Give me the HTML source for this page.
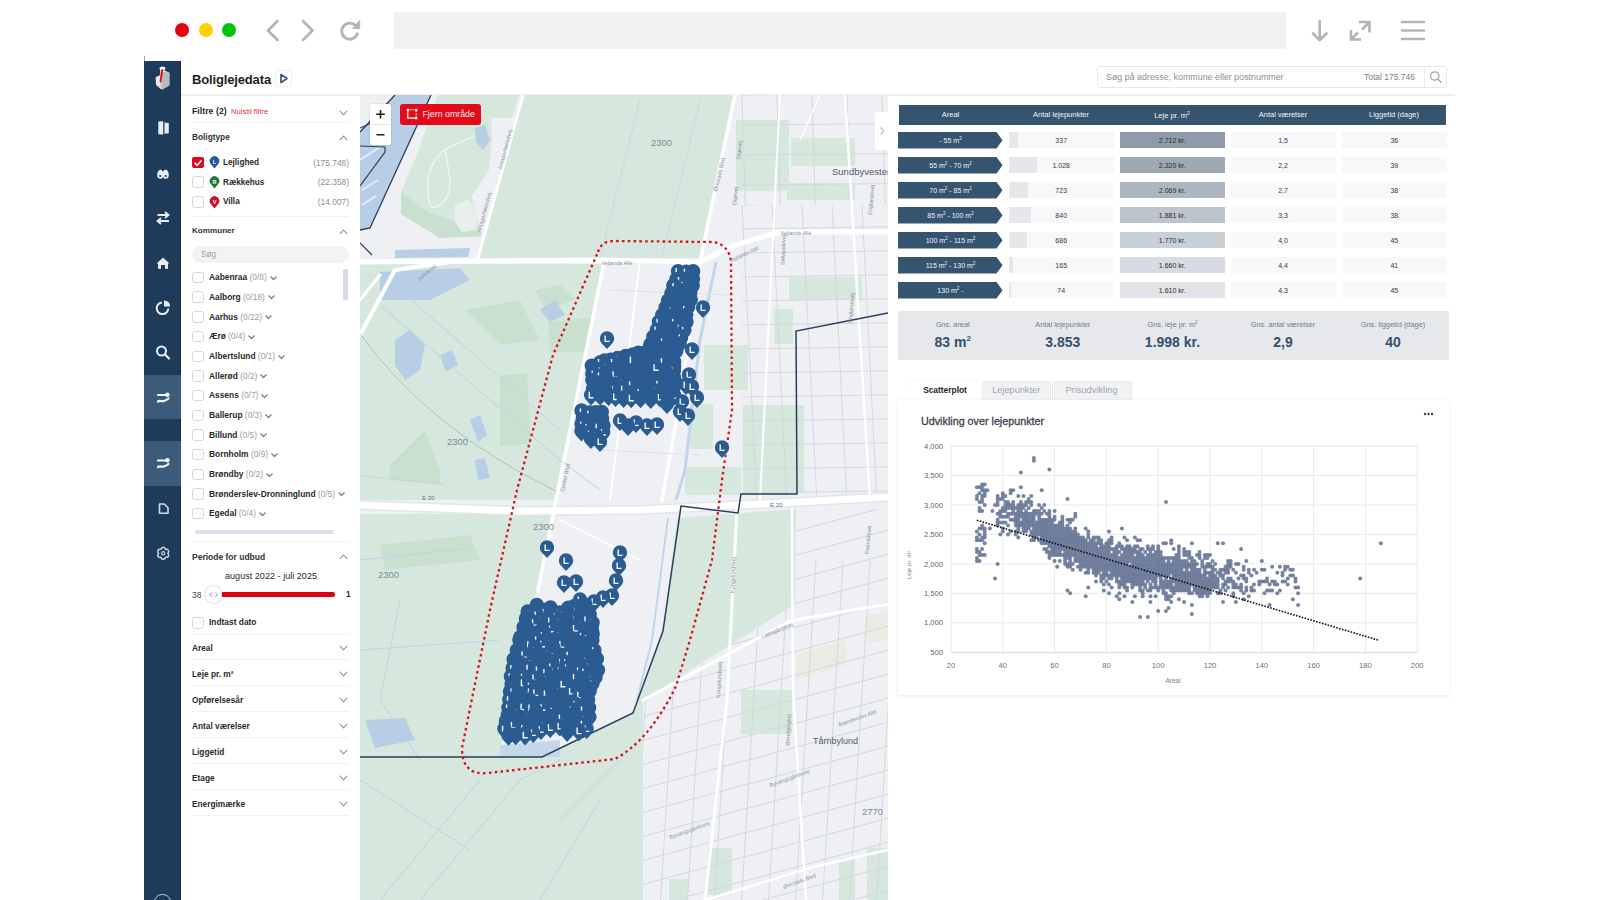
<!DOCTYPE html><html><head><meta charset="utf-8"><style>
*{margin:0;padding:0;box-sizing:border-box}
html,body{width:1600px;height:900px;overflow:hidden;background:#fff;font-family:"Liberation Sans",sans-serif;color:#222}
.a{position:absolute}
.t{position:absolute;white-space:nowrap;line-height:1}
</style></head><body>
<div class="a" style="left:175px;top:23px;width:14px;height:14px;border-radius:50%;background:#e8000d"></div>
<div class="a" style="left:199px;top:23px;width:14px;height:14px;border-radius:50%;background:#ffd200"></div>
<div class="a" style="left:222px;top:23px;width:14px;height:14px;border-radius:50%;background:#00c60a"></div>
<svg class="a" style="left:260px;top:15px" width="120" height="32" viewBox="0 0 120 32">
 <path d="M17.5 6 L8 15.5 L17.5 25" fill="none" stroke="#b4b4b4" stroke-width="2.6" stroke-linecap="round" stroke-linejoin="round"/>
 <path d="M43 6 L52.5 15.5 L43 25" fill="none" stroke="#b4b4b4" stroke-width="2.6" stroke-linecap="round" stroke-linejoin="round"/>
 <path d="M95.5 10.6 A8 8 0 1 0 97.3 18.8" fill="none" stroke="#b4b4b4" stroke-width="2.9" stroke-linecap="round"/>
 <path d="M99.8 5.2 L99.8 13.9 L92.4 13.4Z" fill="#b4b4b4" stroke="#b4b4b4" stroke-width="0.6" stroke-linejoin="round"/>
</svg>
<div class="a" style="left:394px;top:12px;width:892px;height:37px;background:#f2f2f2"></div>
<svg class="a" style="left:1300px;top:15px" width="140" height="32" viewBox="0 0 140 32">
 <path d="M19.7 6 L19.7 25" stroke="#b4b4b4" stroke-width="2.6" stroke-linecap="round"/>
 <path d="M13 18.5 L19.7 25 L26.5 18.5" fill="none" stroke="#b4b4b4" stroke-width="2.6" stroke-linecap="round" stroke-linejoin="round"/>
 <path d="M59 7 L69.5 7 L69.5 17.5 M69.5 7 L62 14.5" fill="none" stroke="#b4b4b4" stroke-width="2.6" stroke-linejoin="miter"/>
 <path d="M51 15 L51 24.5 L61 24.5 M51 24.5 L58 17.5" fill="none" stroke="#b4b4b4" stroke-width="2.6" stroke-linejoin="miter"/>
 <path d="M102 7 L124 7 M102 15.5 L124 15.5 M102 24 L124 24" stroke="#b4b4b4" stroke-width="2.6" stroke-linecap="round"/>
</svg>
<div class="a" style="left:144px;top:56px;width:1px;height:6px;background:#9aa5b5"></div><div class="a" style="left:144px;top:61px;width:37px;height:839px;background:#1e3b5a"></div><div class="a" style="left:180px;top:61px;width:1px;height:839px;background:#132d48"></div><div class="a" style="left:144px;top:375px;width:37px;height:44px;background:#3b5b7b"></div><div class="a" style="left:144px;top:441px;width:37px;height:45px;background:#3b5b7b"></div><div class="a" style="left:181px;top:94px;width:1274px;height:2px;background:#eceef0"></div>
<svg class="a" style="left:144px;top:61px" width="37" height="520" viewBox="0 0 37 520">
 <!-- logo -->
 <path d="M16 9 L25.4 11.8 L25.4 24.6 L18.2 28.4 L16 27.3Z" fill="#c9ccd2"/>
 <path d="M16 9 L18.2 8.4 L25.4 11.8 L18.2 11Z" fill="#f2f3f5"/>
 <path d="M18.2 11 L25.4 11.8 L25.4 24.6 L18.2 28.4Z" fill="#b4b8bf"/>
 <path d="M11.6 16.2 L16 14 L16 27.3 L12.1 24Z" fill="#e6e7ea"/>
 <path d="M12.1 24 L16 27.3 L18.2 28.4 L18.2 25.5 L16 24.5Z" fill="#d4d6db"/>
 <ellipse cx="18.4" cy="7.4" rx="2.9" ry="1.9" fill="#f6f6f8"/>
 <path d="M17.4 8.2 L19.4 8.6 L17.2 21.4 L15.6 21Z" fill="#e30613"/>
 <!-- book -->
 <path d="M14.3 60.5 L19.2 60.2 L19.2 73.4 L14.3 73.2 Z" fill="#e9edf2"/>
 <path d="M20.5 61.4 L24.8 62 L24.8 72.2 L20.5 72.8 Z" fill="#e9edf2"/>
 <!-- binoculars -->
 <path d="M13.2 114.5 C13.2 110.5 15 108.8 16.6 108.8 C18 108.8 18.6 110 19 111 C19.4 110 20 108.8 21.4 108.8 C23 108.8 24.8 110.5 24.8 114.5 C24.8 116.8 23.3 117.8 21.6 117.8 C20.2 117.8 19.4 116.8 19 116 C18.6 116.8 17.8 117.8 16.4 117.8 C14.7 117.8 13.2 116.8 13.2 114.5Z" fill="#e9edf2"/>
 <circle cx="16.2" cy="115" r="1.1" fill="#1b3a5b"/><circle cx="21.8" cy="115" r="1.1" fill="#1b3a5b"/>
 <!-- arrows -->
 <path d="M13.5 154 L24 154 M21 151 L24.5 154 L21 157" fill="none" stroke="#e9edf2" stroke-width="1.8"/>
 <path d="M25 160 L14 160 M17 157 L13.5 160 L17 163" fill="none" stroke="#e9edf2" stroke-width="1.8"/>
 <!-- home -->
 <path d="M12.5 202.5 L19 196.5 L25.5 202.5 L24 202.5 L24 207.8 L21 207.8 L21 204 L17 204 L17 207.8 L14 207.8 L14 202.5Z" fill="#e9edf2"/>
 <!-- pie -->
 <path d="M18 241.5 A5.8 5.8 0 1 0 24.3 247.5" fill="none" stroke="#e9edf2" stroke-width="2"/>
 <path d="M20 239.5 A5.5 5.5 0 0 1 26 245.5 L20 245.5Z" fill="#e9edf2"/>
 <!-- search -->
 <circle cx="17.5" cy="290" r="4.5" fill="none" stroke="#e9edf2" stroke-width="2"/>
 <path d="M20.8 293.3 L25 297.5" stroke="#e9edf2" stroke-width="2.2" stroke-linecap="round"/>
 <!-- swap key 1 -->
 <g fill="none" stroke="#f4f6f9" stroke-width="2.2" stroke-linecap="round">
  <path d="M14 334 L21.5 334"/><path d="M14 340.5 C16 339 17.5 340.8 19.5 340 C21.5 339.3 23 339 24.5 337.5"/>
  <path d="M14 399.5 L21.5 399.5"/><path d="M14 406 C16 404.5 17.5 406.3 19.5 405.5 C21.5 404.8 23 404.5 24.5 403"/>
 </g>
 <circle cx="23.4" cy="333.8" r="2.3" fill="#f4f6f9"/>
 <circle cx="23.4" cy="399.3" r="2.3" fill="#f4f6f9"/>
 <!-- file -->
 <path d="M15.5 443 L20.2 443 L24 446.8 L24 452.3 L15.5 452.3Z" fill="none" stroke="#d3dae3" stroke-width="1.6" stroke-linejoin="round"/>
 <!-- gear -->
 <g transform="translate(19.2,492.3)">
  <path d="M0.00 -6.10 L1.45 -5.41 L2.35 -4.07 L3.96 -3.96 L5.28 -3.05 L5.41 -1.45 L4.70 0.00 L5.41 1.45 L5.28 3.05 L3.96 3.96 L2.35 4.07 L1.45 5.41 L0.00 6.10 L-1.45 5.41 L-2.35 4.07 L-3.96 3.96 L-5.28 3.05 L-5.41 1.45 L-4.70 0.00 L-5.41 -1.45 L-5.28 -3.05 L-3.96 -3.96 L-2.35 -4.07 L-1.45 -5.41Z" fill="none" stroke="#cdd6e0" stroke-width="1.5" stroke-linejoin="round"/>
  <circle r="1.6" fill="none" stroke="#cdd6e0" stroke-width="1.2"/>
 </g>
</svg>
<div class="a" style="left:154px;top:893.5px;width:16.5px;height:16.5px;border-radius:50%;border:1.5px solid #b9c6d4"></div>
<div class="t" style="left:192px;top:73px;font-size:13px;font-weight:bold;color:#1e1e1e;letter-spacing:-0.15px">Boliglejedata</div><div class="a" style="left:275px;top:70px;width:17px;height:17px;border:1px solid #eceef2;border-radius:3px;background:#fff"></div>
<svg class="a" style="left:275px;top:70px" width="17" height="17" viewBox="0 0 17 17"><path d="M6 4.5 L12 8.5 L6 12.5Z" fill="none" stroke="#3d5878" stroke-width="1.7" stroke-linejoin="round"/></svg><div class="a" style="left:1097px;top:66px;width:350px;height:22px;border:1px solid #e6e8eb;border-radius:3px;background:#fff"></div>
<div class="a" style="left:1424px;top:67px;width:1px;height:20px;background:#eceef0"></div>
<div class="t" style="left:1106px;top:72.5px;font-size:8.9px;color:#8a8f96">Søg på adresse, kommune eller postnummer</div>
<div class="t" style="left:1364px;top:72.5px;font-size:8.5px;color:#7a7f86">Total 175.746</div>
<svg class="a" style="left:1427px;top:68px" width="18" height="18" viewBox="0 0 18 18"><circle cx="7.8" cy="8" r="4.2" fill="none" stroke="#a4a9b0" stroke-width="1.3"/><path d="M10.8 11 L14 14.2" stroke="#a4a9b0" stroke-width="1.4" stroke-linecap="round"/></svg>
<div class="t" style="left:192px;top:106.95px;font-size:8.8px;color:#2a2a2a;font-weight:bold;">Filtre (2)</div><div class="t" style="left:231px;top:107.97px;font-size:7.6px;color:#e0303a;font-weight:normal;">Nulstil filtre</div><svg class="a" style="left:339px;top:109.5px" width="9" height="5.8500000000000005" viewBox="0 0 9 5.8500000000000005"><path d="M1 1 L4.5 4.8500000000000005 L8 1" fill="none" stroke="#8a9099" stroke-width="1.1" stroke-linecap="round" stroke-linejoin="round"/></svg><div class="a" style="left:192px;top:122px;width:157px;height:1px;background:#eef0f2"></div><div class="t" style="left:192px;top:133.17px;font-size:8.3px;color:#333;font-weight:bold;">Boligtype</div><svg class="a" style="left:339px;top:134.5px" width="9" height="5.8500000000000005" viewBox="0 0 9 5.8500000000000005"><path d="M1 4.8500000000000005 L4.5 1 L8 4.8500000000000005" fill="none" stroke="#8a9099" stroke-width="1.1" stroke-linecap="round" stroke-linejoin="round"/></svg><div class="a" style="left:192px;top:156.6px;width:12px;height:11.5px;border-radius:2px;background:#e10a1a"></div><svg class="a" style="left:192px;top:156.6px" width="12" height="12" viewBox="0 0 12 12"><path d="M3 6.2 L5.2 8.3 L9.2 3.8" fill="none" stroke="#fff" stroke-width="1.6" stroke-linecap="round" stroke-linejoin="round"/></svg><svg class="a" style="left:209px;top:156.1px" width="11" height="13" viewBox="0 0 11 13"><path d="M5.5 12.5 L1.6 7.8 A4.8 4.8 0 1 1 9.4 7.8Z" fill="#1f5a99"/><text x="5.5" y="7.8" font-size="5.5" font-weight="bold" fill="#fff" text-anchor="middle" font-family="Liberation Sans">L</text></svg><div class="t" style="left:223px;top:158.86px;font-size:8.2px;color:#2a2a2a;font-weight:bold;">Lejlighed</div><div class="t" style="right:1251px;top:158.69px;font-size:8.4px;color:#8d9197;font-weight:normal;">(175.748)</div><div class="a" style="left:192px;top:176.4px;width:12px;height:11.5px;border-radius:2.5px;border:1.5px solid #d5d8df;background:#fff"></div><svg class="a" style="left:209px;top:175.9px" width="11" height="13" viewBox="0 0 11 13"><path d="M5.5 12.5 L1.6 7.8 A4.8 4.8 0 1 1 9.4 7.8Z" fill="#1e7a3a"/><text x="5.5" y="7.8" font-size="5.5" font-weight="bold" fill="#fff" text-anchor="middle" font-family="Liberation Sans">R</text></svg><div class="t" style="left:223px;top:178.66px;font-size:8.2px;color:#2a2a2a;font-weight:bold;">Rækkehus</div><div class="t" style="right:1251px;top:178.49px;font-size:8.4px;color:#8d9197;font-weight:normal;">(22.358)</div><div class="a" style="left:192px;top:196.2px;width:12px;height:11.5px;border-radius:2.5px;border:1.5px solid #d5d8df;background:#fff"></div><svg class="a" style="left:209px;top:195.7px" width="11" height="13" viewBox="0 0 11 13"><path d="M5.5 12.5 L1.6 7.8 A4.8 4.8 0 1 1 9.4 7.8Z" fill="#c2132a"/><text x="5.5" y="7.8" font-size="5.5" font-weight="bold" fill="#fff" text-anchor="middle" font-family="Liberation Sans">V</text></svg><div class="t" style="left:223px;top:198.46px;font-size:8.2px;color:#2a2a2a;font-weight:bold;">Villa</div><div class="t" style="right:1251px;top:198.29px;font-size:8.4px;color:#8d9197;font-weight:normal;">(14.007)</div><div class="a" style="left:192px;top:216px;width:157px;height:1px;background:#eef0f2"></div><div class="t" style="left:192px;top:227.14px;font-size:8.1px;color:#333;font-weight:bold;">Kommuner</div><svg class="a" style="left:339px;top:228.5px" width="9" height="5.8500000000000005" viewBox="0 0 9 5.8500000000000005"><path d="M1 4.8500000000000005 L4.5 1 L8 4.8500000000000005" fill="none" stroke="#8a9099" stroke-width="1.1" stroke-linecap="round" stroke-linejoin="round"/></svg><div class="a" style="left:192px;top:245.5px;width:157px;height:17.5px;border-radius:9px;background:#f2f3f5"></div><div class="t" style="left:201px;top:251.06px;font-size:8.2px;color:#9aa0a8;font-weight:normal;">Søg</div><div class="a" style="left:192px;top:271.8px;width:12px;height:11.5px;border-radius:2.5px;border:1.5px solid #d5d8df;background:#fff"></div><div class="t" style="left:209px;top:273.29px;font-size:8.4px;color:#2a2a2a;font-weight:bold">Aabenraa <span style="font-weight:normal;color:#9a9ea5">(0/8)</span><svg width="9" height="6" viewBox="0 0 9 6" style="margin-left:2px;vertical-align:-0.5px"><path d="M1.5 1.5 L4.5 4.5 L7.5 1.5" fill="none" stroke="#7a7f86" stroke-width="1.25"/></svg></div><div class="a" style="left:192px;top:291.48px;width:12px;height:11.5px;border-radius:2.5px;border:1.5px solid #d5d8df;background:#fff"></div><div class="t" style="left:209px;top:292.97px;font-size:8.4px;color:#2a2a2a;font-weight:bold">Aalborg <span style="font-weight:normal;color:#9a9ea5">(0/18)</span><svg width="9" height="6" viewBox="0 0 9 6" style="margin-left:2px;vertical-align:-0.5px"><path d="M1.5 1.5 L4.5 4.5 L7.5 1.5" fill="none" stroke="#7a7f86" stroke-width="1.25"/></svg></div><div class="a" style="left:192px;top:311.16px;width:12px;height:11.5px;border-radius:2.5px;border:1.5px solid #d5d8df;background:#fff"></div><div class="t" style="left:209px;top:312.65px;font-size:8.4px;color:#2a2a2a;font-weight:bold">Aarhus <span style="font-weight:normal;color:#9a9ea5">(0/22)</span><svg width="9" height="6" viewBox="0 0 9 6" style="margin-left:2px;vertical-align:-0.5px"><path d="M1.5 1.5 L4.5 4.5 L7.5 1.5" fill="none" stroke="#7a7f86" stroke-width="1.25"/></svg></div><div class="a" style="left:192px;top:330.84000000000003px;width:12px;height:11.5px;border-radius:2.5px;border:1.5px solid #d5d8df;background:#fff"></div><div class="t" style="left:209px;top:332.33px;font-size:8.4px;color:#2a2a2a;font-weight:bold">Ærø <span style="font-weight:normal;color:#9a9ea5">(0/4)</span><svg width="9" height="6" viewBox="0 0 9 6" style="margin-left:2px;vertical-align:-0.5px"><path d="M1.5 1.5 L4.5 4.5 L7.5 1.5" fill="none" stroke="#7a7f86" stroke-width="1.25"/></svg></div><div class="a" style="left:192px;top:350.52px;width:12px;height:11.5px;border-radius:2.5px;border:1.5px solid #d5d8df;background:#fff"></div><div class="t" style="left:209px;top:352.01px;font-size:8.4px;color:#2a2a2a;font-weight:bold">Albertslund <span style="font-weight:normal;color:#9a9ea5">(0/1)</span><svg width="9" height="6" viewBox="0 0 9 6" style="margin-left:2px;vertical-align:-0.5px"><path d="M1.5 1.5 L4.5 4.5 L7.5 1.5" fill="none" stroke="#7a7f86" stroke-width="1.25"/></svg></div><div class="a" style="left:192px;top:370.20000000000005px;width:12px;height:11.5px;border-radius:2.5px;border:1.5px solid #d5d8df;background:#fff"></div><div class="t" style="left:209px;top:371.69px;font-size:8.4px;color:#2a2a2a;font-weight:bold">Allerød <span style="font-weight:normal;color:#9a9ea5">(0/2)</span><svg width="9" height="6" viewBox="0 0 9 6" style="margin-left:2px;vertical-align:-0.5px"><path d="M1.5 1.5 L4.5 4.5 L7.5 1.5" fill="none" stroke="#7a7f86" stroke-width="1.25"/></svg></div><div class="a" style="left:192px;top:389.88px;width:12px;height:11.5px;border-radius:2.5px;border:1.5px solid #d5d8df;background:#fff"></div><div class="t" style="left:209px;top:391.37px;font-size:8.4px;color:#2a2a2a;font-weight:bold">Assens <span style="font-weight:normal;color:#9a9ea5">(0/7)</span><svg width="9" height="6" viewBox="0 0 9 6" style="margin-left:2px;vertical-align:-0.5px"><path d="M1.5 1.5 L4.5 4.5 L7.5 1.5" fill="none" stroke="#7a7f86" stroke-width="1.25"/></svg></div><div class="a" style="left:192px;top:409.56px;width:12px;height:11.5px;border-radius:2.5px;border:1.5px solid #d5d8df;background:#fff"></div><div class="t" style="left:209px;top:411.05px;font-size:8.4px;color:#2a2a2a;font-weight:bold">Ballerup <span style="font-weight:normal;color:#9a9ea5">(0/3)</span><svg width="9" height="6" viewBox="0 0 9 6" style="margin-left:2px;vertical-align:-0.5px"><path d="M1.5 1.5 L4.5 4.5 L7.5 1.5" fill="none" stroke="#7a7f86" stroke-width="1.25"/></svg></div><div class="a" style="left:192px;top:429.24px;width:12px;height:11.5px;border-radius:2.5px;border:1.5px solid #d5d8df;background:#fff"></div><div class="t" style="left:209px;top:430.73px;font-size:8.4px;color:#2a2a2a;font-weight:bold">Billund <span style="font-weight:normal;color:#9a9ea5">(0/5)</span><svg width="9" height="6" viewBox="0 0 9 6" style="margin-left:2px;vertical-align:-0.5px"><path d="M1.5 1.5 L4.5 4.5 L7.5 1.5" fill="none" stroke="#7a7f86" stroke-width="1.25"/></svg></div><div class="a" style="left:192px;top:448.92px;width:12px;height:11.5px;border-radius:2.5px;border:1.5px solid #d5d8df;background:#fff"></div><div class="t" style="left:209px;top:450.41px;font-size:8.4px;color:#2a2a2a;font-weight:bold">Bornholm <span style="font-weight:normal;color:#9a9ea5">(0/9)</span><svg width="9" height="6" viewBox="0 0 9 6" style="margin-left:2px;vertical-align:-0.5px"><path d="M1.5 1.5 L4.5 4.5 L7.5 1.5" fill="none" stroke="#7a7f86" stroke-width="1.25"/></svg></div><div class="a" style="left:192px;top:468.6px;width:12px;height:11.5px;border-radius:2.5px;border:1.5px solid #d5d8df;background:#fff"></div><div class="t" style="left:209px;top:470.09px;font-size:8.4px;color:#2a2a2a;font-weight:bold">Brøndby <span style="font-weight:normal;color:#9a9ea5">(0/2)</span><svg width="9" height="6" viewBox="0 0 9 6" style="margin-left:2px;vertical-align:-0.5px"><path d="M1.5 1.5 L4.5 4.5 L7.5 1.5" fill="none" stroke="#7a7f86" stroke-width="1.25"/></svg></div><div class="a" style="left:192px;top:488.28px;width:12px;height:11.5px;border-radius:2.5px;border:1.5px solid #d5d8df;background:#fff"></div><div class="t" style="left:209px;top:489.77px;font-size:8.4px;color:#2a2a2a;font-weight:bold">Brønderslev-Dronninglund <span style="font-weight:normal;color:#9a9ea5">(0/5)</span><svg width="9" height="6" viewBox="0 0 9 6" style="margin-left:2px;vertical-align:-0.5px"><path d="M1.5 1.5 L4.5 4.5 L7.5 1.5" fill="none" stroke="#7a7f86" stroke-width="1.25"/></svg></div><div class="a" style="left:192px;top:507.96000000000004px;width:12px;height:11.5px;border-radius:2.5px;border:1.5px solid #d5d8df;background:#fff"></div><div class="t" style="left:209px;top:509.45px;font-size:8.4px;color:#2a2a2a;font-weight:bold">Egedal <span style="font-weight:normal;color:#9a9ea5">(0/4)</span><svg width="9" height="6" viewBox="0 0 9 6" style="margin-left:2px;vertical-align:-0.5px"><path d="M1.5 1.5 L4.5 4.5 L7.5 1.5" fill="none" stroke="#7a7f86" stroke-width="1.25"/></svg></div><div class="a" style="left:343px;top:269px;width:4.5px;height:30.5px;border-radius:2px;background:#d6dae8"></div><div class="a" style="left:195px;top:530px;width:138.5px;height:4px;border-radius:2px;background:#dcdde9"></div><div class="a" style="left:192px;top:541px;width:157px;height:1px;background:#eef0f2"></div><div class="t" style="left:192px;top:552.80px;font-size:8.5px;color:#333;font-weight:bold;">Periode for udbud</div><svg class="a" style="left:339px;top:553.5px" width="9" height="5.8500000000000005" viewBox="0 0 9 5.8500000000000005"><path d="M1 4.8500000000000005 L4.5 1 L8 4.8500000000000005" fill="none" stroke="#8a9099" stroke-width="1.1" stroke-linecap="round" stroke-linejoin="round"/></svg><div class="t" style="left:71px;width:400px;text-align:center;top:571.80px;font-size:9.1px;color:#2a2a2a;font-weight:normal;">august 2022 - juli 2025</div><div class="t" style="left:192px;top:590.79px;font-size:8.4px;color:#3d4147;font-weight:normal;">38</div><div class="a" style="left:221px;top:592.2px;width:114px;height:4.4px;border-radius:2.2px;background:#da000f"></div><div class="a" style="left:204.5px;top:586px;width:17px;height:17px;border-radius:50%;background:#fff;box-shadow:0 0 2px rgba(0,0,0,0.35)"></div><svg class="a" style="left:204.5px;top:586px" width="17" height="17" viewBox="0 0 17 17"><path d="M6.6 6.6 L4.8 8.6 L6.6 10.6 M10.4 6.6 L12.2 8.6 L10.4 10.6" fill="none" stroke="#6f747b" stroke-width="0.9"/></svg><div class="t" style="left:346px;top:590.76px;font-size:8.2px;color:#2a2a2a;font-weight:bold;">1</div><div class="a" style="left:192px;top:617px;width:12px;height:11.5px;border-radius:2.5px;border:1.5px solid #d5d8df;background:#fff"></div><div class="t" style="left:209px;top:618.19px;font-size:8.4px;color:#2a2a2a;font-weight:bold;">Indtast dato</div><div class="a" style="left:192px;top:633.5px;width:157px;height:1px;background:#eef0f2"></div><div class="t" style="left:192px;top:643.77px;font-size:8.3px;color:#2a2a2a;font-weight:bold;">Areal</div><svg class="a" style="left:339px;top:645.3px" width="9" height="5.8500000000000005" viewBox="0 0 9 5.8500000000000005"><path d="M1 1 L4.5 4.8500000000000005 L8 1" fill="none" stroke="#8a9099" stroke-width="1.1" stroke-linecap="round" stroke-linejoin="round"/></svg><div class="a" style="left:192px;top:659.4px;width:157px;height:1px;background:#eef0f2"></div><div class="t" style="left:192px;top:669.77px;font-size:8.3px;color:#2a2a2a;font-weight:bold;">Leje pr. m²</div><svg class="a" style="left:339px;top:671.3px" width="9" height="5.8500000000000005" viewBox="0 0 9 5.8500000000000005"><path d="M1 1 L4.5 4.8500000000000005 L8 1" fill="none" stroke="#8a9099" stroke-width="1.1" stroke-linecap="round" stroke-linejoin="round"/></svg><div class="a" style="left:192px;top:685.4px;width:157px;height:1px;background:#eef0f2"></div><div class="t" style="left:192px;top:695.77px;font-size:8.3px;color:#2a2a2a;font-weight:bold;">Opførelsesår</div><svg class="a" style="left:339px;top:697.3px" width="9" height="5.8500000000000005" viewBox="0 0 9 5.8500000000000005"><path d="M1 1 L4.5 4.8500000000000005 L8 1" fill="none" stroke="#8a9099" stroke-width="1.1" stroke-linecap="round" stroke-linejoin="round"/></svg><div class="a" style="left:192px;top:711.4px;width:157px;height:1px;background:#eef0f2"></div><div class="t" style="left:192px;top:721.77px;font-size:8.3px;color:#2a2a2a;font-weight:bold;">Antal værelser</div><svg class="a" style="left:339px;top:723.3px" width="9" height="5.8500000000000005" viewBox="0 0 9 5.8500000000000005"><path d="M1 1 L4.5 4.8500000000000005 L8 1" fill="none" stroke="#8a9099" stroke-width="1.1" stroke-linecap="round" stroke-linejoin="round"/></svg><div class="a" style="left:192px;top:737.4px;width:157px;height:1px;background:#eef0f2"></div><div class="t" style="left:192px;top:747.77px;font-size:8.3px;color:#2a2a2a;font-weight:bold;">Liggetid</div><svg class="a" style="left:339px;top:749.3px" width="9" height="5.8500000000000005" viewBox="0 0 9 5.8500000000000005"><path d="M1 1 L4.5 4.8500000000000005 L8 1" fill="none" stroke="#8a9099" stroke-width="1.1" stroke-linecap="round" stroke-linejoin="round"/></svg><div class="a" style="left:192px;top:763.4px;width:157px;height:1px;background:#eef0f2"></div><div class="t" style="left:192px;top:773.77px;font-size:8.3px;color:#2a2a2a;font-weight:bold;">Etage</div><svg class="a" style="left:339px;top:775.3px" width="9" height="5.8500000000000005" viewBox="0 0 9 5.8500000000000005"><path d="M1 1 L4.5 4.8500000000000005 L8 1" fill="none" stroke="#8a9099" stroke-width="1.1" stroke-linecap="round" stroke-linejoin="round"/></svg><div class="a" style="left:192px;top:789.4px;width:157px;height:1px;background:#eef0f2"></div><div class="t" style="left:192px;top:799.77px;font-size:8.3px;color:#2a2a2a;font-weight:bold;">Energimærke</div><svg class="a" style="left:339px;top:801.3px" width="9" height="5.8500000000000005" viewBox="0 0 9 5.8500000000000005"><path d="M1 1 L4.5 4.8500000000000005 L8 1" fill="none" stroke="#8a9099" stroke-width="1.1" stroke-linecap="round" stroke-linejoin="round"/></svg><div class="a" style="left:192px;top:815.4px;width:157px;height:1px;background:#eef0f2"></div><div class="a" style="left:898.5px;top:105px;width:547px;height:19.5px;background:#35546f"></div><div class="t" style="left:750.5px;width:400px;text-align:center;top:111.15px;font-size:7.5px;color:#f2f5f8;font-weight:normal;">Areal</div><div class="t" style="left:861px;width:400px;text-align:center;top:111.15px;font-size:7.5px;color:#f2f5f8;font-weight:normal;">Antal lejepunkter</div><div class="t" style="left:972px;width:400px;text-align:center;top:111.15px;font-size:7.5px;color:#f2f5f8;font-weight:normal;">Leje pr. m<sup style="font-size:5px;vertical-align:3px">2</sup></div><div class="t" style="left:1083px;width:400px;text-align:center;top:111.15px;font-size:7.5px;color:#f2f5f8;font-weight:normal;">Antal værelser</div><div class="t" style="left:1194px;width:400px;text-align:center;top:111.15px;font-size:7.5px;color:#f2f5f8;font-weight:normal;">Liggetid (dage)</div><svg class="a" style="left:898px;top:131.5px" width="106" height="17" viewBox="0 0 106 17"><path d="M0 0 L98.5 0 L104.5 8.25 L98.5 16.5 L0 16.5Z" fill="#35546f"/></svg><div class="t" style="left:750.5px;width:400px;text-align:center;top:136.57px;font-size:7px;color:#f2f5f8;font-weight:normal;">- 55 m<sup style="font-size:4.5px;vertical-align:3px">2</sup></div><div class="a" style="left:1008.6px;top:131.5px;width:105.2px;height:16.5px;background:#f7f8f9"></div><div class="a" style="left:1008.6px;top:131.5px;width:9.2px;height:16.5px;background:#e5e7ea"></div><div class="t" style="left:861.2px;width:400px;text-align:center;top:136.57px;font-size:7px;color:#3a3a3a;font-weight:normal;">337</div><div class="a" style="left:1119.6px;top:131.5px;width:105.4px;height:16.5px;background:#8f9ba8"></div><div class="t" style="left:972.3px;width:400px;text-align:center;top:136.57px;font-size:7px;color:#2a2a2a;font-weight:normal;">2.712 kr.</div><div class="a" style="left:1230.5px;top:131.5px;width:105.2px;height:16.5px;background:#f7f8f9"></div><div class="t" style="left:1083px;width:400px;text-align:center;top:136.57px;font-size:7px;color:#3a3a3a;font-weight:normal;">1,5</div><div class="a" style="left:1341.9px;top:131.5px;width:104.8px;height:16.5px;background:#f7f8f9"></div><div class="t" style="left:1194.3px;width:400px;text-align:center;top:136.57px;font-size:7px;color:#3a3a3a;font-weight:normal;">36</div><svg class="a" style="left:898px;top:156.5px" width="106" height="17" viewBox="0 0 106 17"><path d="M0 0 L98.5 0 L104.5 8.25 L98.5 16.5 L0 16.5Z" fill="#35546f"/></svg><div class="t" style="left:750.5px;width:400px;text-align:center;top:161.57px;font-size:7px;color:#f2f5f8;font-weight:normal;">55 m<sup style="font-size:4.5px;vertical-align:3px">2</sup> - 70 m<sup style="font-size:4.5px;vertical-align:3px">2</sup></div><div class="a" style="left:1008.6px;top:156.5px;width:105.2px;height:16.5px;background:#f7f8f9"></div><div class="a" style="left:1008.6px;top:156.5px;width:28.1px;height:16.5px;background:#e5e7ea"></div><div class="t" style="left:861.2px;width:400px;text-align:center;top:161.57px;font-size:7px;color:#3a3a3a;font-weight:normal;">1.028</div><div class="a" style="left:1119.6px;top:156.5px;width:105.4px;height:16.5px;background:#9ea9b4"></div><div class="t" style="left:972.3px;width:400px;text-align:center;top:161.57px;font-size:7px;color:#2a2a2a;font-weight:normal;">2.320 kr.</div><div class="a" style="left:1230.5px;top:156.5px;width:105.2px;height:16.5px;background:#f7f8f9"></div><div class="t" style="left:1083px;width:400px;text-align:center;top:161.57px;font-size:7px;color:#3a3a3a;font-weight:normal;">2,2</div><div class="a" style="left:1341.9px;top:156.5px;width:104.8px;height:16.5px;background:#f7f8f9"></div><div class="t" style="left:1194.3px;width:400px;text-align:center;top:161.57px;font-size:7px;color:#3a3a3a;font-weight:normal;">39</div><svg class="a" style="left:898px;top:181.5px" width="106" height="17" viewBox="0 0 106 17"><path d="M0 0 L98.5 0 L104.5 8.25 L98.5 16.5 L0 16.5Z" fill="#35546f"/></svg><div class="t" style="left:750.5px;width:400px;text-align:center;top:186.57px;font-size:7px;color:#f2f5f8;font-weight:normal;">70 m<sup style="font-size:4.5px;vertical-align:3px">2</sup> - 85 m<sup style="font-size:4.5px;vertical-align:3px">2</sup></div><div class="a" style="left:1008.6px;top:181.5px;width:105.2px;height:16.5px;background:#f7f8f9"></div><div class="a" style="left:1008.6px;top:181.5px;width:19.7px;height:16.5px;background:#e5e7ea"></div><div class="t" style="left:861.2px;width:400px;text-align:center;top:186.57px;font-size:7px;color:#3a3a3a;font-weight:normal;">723</div><div class="a" style="left:1119.6px;top:181.5px;width:105.4px;height:16.5px;background:#aeb7c0"></div><div class="t" style="left:972.3px;width:400px;text-align:center;top:186.57px;font-size:7px;color:#2a2a2a;font-weight:normal;">2.069 kr.</div><div class="a" style="left:1230.5px;top:181.5px;width:105.2px;height:16.5px;background:#f7f8f9"></div><div class="t" style="left:1083px;width:400px;text-align:center;top:186.57px;font-size:7px;color:#3a3a3a;font-weight:normal;">2,7</div><div class="a" style="left:1341.9px;top:181.5px;width:104.8px;height:16.5px;background:#f7f8f9"></div><div class="t" style="left:1194.3px;width:400px;text-align:center;top:186.57px;font-size:7px;color:#3a3a3a;font-weight:normal;">38</div><svg class="a" style="left:898px;top:206.5px" width="106" height="17" viewBox="0 0 106 17"><path d="M0 0 L98.5 0 L104.5 8.25 L98.5 16.5 L0 16.5Z" fill="#35546f"/></svg><div class="t" style="left:750.5px;width:400px;text-align:center;top:211.57px;font-size:7px;color:#f2f5f8;font-weight:normal;">85 m<sup style="font-size:4.5px;vertical-align:3px">2</sup> - 100 m<sup style="font-size:4.5px;vertical-align:3px">2</sup></div><div class="a" style="left:1008.6px;top:206.5px;width:105.2px;height:16.5px;background:#f7f8f9"></div><div class="a" style="left:1008.6px;top:206.5px;width:22.9px;height:16.5px;background:#e5e7ea"></div><div class="t" style="left:861.2px;width:400px;text-align:center;top:211.57px;font-size:7px;color:#3a3a3a;font-weight:normal;">840</div><div class="a" style="left:1119.6px;top:206.5px;width:105.4px;height:16.5px;background:#bdc4cc"></div><div class="t" style="left:972.3px;width:400px;text-align:center;top:211.57px;font-size:7px;color:#2a2a2a;font-weight:normal;">1.881 kr.</div><div class="a" style="left:1230.5px;top:206.5px;width:105.2px;height:16.5px;background:#f7f8f9"></div><div class="t" style="left:1083px;width:400px;text-align:center;top:211.57px;font-size:7px;color:#3a3a3a;font-weight:normal;">3,3</div><div class="a" style="left:1341.9px;top:206.5px;width:104.8px;height:16.5px;background:#f7f8f9"></div><div class="t" style="left:1194.3px;width:400px;text-align:center;top:211.57px;font-size:7px;color:#3a3a3a;font-weight:normal;">38</div><svg class="a" style="left:898px;top:231.5px" width="106" height="17" viewBox="0 0 106 17"><path d="M0 0 L98.5 0 L104.5 8.25 L98.5 16.5 L0 16.5Z" fill="#35546f"/></svg><div class="t" style="left:750.5px;width:400px;text-align:center;top:236.57px;font-size:7px;color:#f2f5f8;font-weight:normal;">100 m<sup style="font-size:4.5px;vertical-align:3px">2</sup> - 115 m<sup style="font-size:4.5px;vertical-align:3px">2</sup></div><div class="a" style="left:1008.6px;top:231.5px;width:105.2px;height:16.5px;background:#f7f8f9"></div><div class="a" style="left:1008.6px;top:231.5px;width:18.7px;height:16.5px;background:#e5e7ea"></div><div class="t" style="left:861.2px;width:400px;text-align:center;top:236.57px;font-size:7px;color:#3a3a3a;font-weight:normal;">686</div><div class="a" style="left:1119.6px;top:231.5px;width:105.4px;height:16.5px;background:#cbd0d7"></div><div class="t" style="left:972.3px;width:400px;text-align:center;top:236.57px;font-size:7px;color:#2a2a2a;font-weight:normal;">1.770 kr.</div><div class="a" style="left:1230.5px;top:231.5px;width:105.2px;height:16.5px;background:#f7f8f9"></div><div class="t" style="left:1083px;width:400px;text-align:center;top:236.57px;font-size:7px;color:#3a3a3a;font-weight:normal;">4,0</div><div class="a" style="left:1341.9px;top:231.5px;width:104.8px;height:16.5px;background:#f7f8f9"></div><div class="t" style="left:1194.3px;width:400px;text-align:center;top:236.57px;font-size:7px;color:#3a3a3a;font-weight:normal;">45</div><svg class="a" style="left:898px;top:256.5px" width="106" height="17" viewBox="0 0 106 17"><path d="M0 0 L98.5 0 L104.5 8.25 L98.5 16.5 L0 16.5Z" fill="#35546f"/></svg><div class="t" style="left:750.5px;width:400px;text-align:center;top:261.57px;font-size:7px;color:#f2f5f8;font-weight:normal;">115 m<sup style="font-size:4.5px;vertical-align:3px">2</sup> - 130 m<sup style="font-size:4.5px;vertical-align:3px">2</sup></div><div class="a" style="left:1008.6px;top:256.5px;width:105.2px;height:16.5px;background:#f7f8f9"></div><div class="a" style="left:1008.6px;top:256.5px;width:4.5px;height:16.5px;background:#e5e7ea"></div><div class="t" style="left:861.2px;width:400px;text-align:center;top:261.57px;font-size:7px;color:#3a3a3a;font-weight:normal;">165</div><div class="a" style="left:1119.6px;top:256.5px;width:105.4px;height:16.5px;background:#d8dbe1"></div><div class="t" style="left:972.3px;width:400px;text-align:center;top:261.57px;font-size:7px;color:#2a2a2a;font-weight:normal;">1.660 kr.</div><div class="a" style="left:1230.5px;top:256.5px;width:105.2px;height:16.5px;background:#f7f8f9"></div><div class="t" style="left:1083px;width:400px;text-align:center;top:261.57px;font-size:7px;color:#3a3a3a;font-weight:normal;">4,4</div><div class="a" style="left:1341.9px;top:256.5px;width:104.8px;height:16.5px;background:#f7f8f9"></div><div class="t" style="left:1194.3px;width:400px;text-align:center;top:261.57px;font-size:7px;color:#3a3a3a;font-weight:normal;">41</div><svg class="a" style="left:898px;top:281.5px" width="106" height="17" viewBox="0 0 106 17"><path d="M0 0 L98.5 0 L104.5 8.25 L98.5 16.5 L0 16.5Z" fill="#35546f"/></svg><div class="t" style="left:750.5px;width:400px;text-align:center;top:286.57px;font-size:7px;color:#f2f5f8;font-weight:normal;">130 m<sup style="font-size:4.5px;vertical-align:3px">2</sup> -</div><div class="a" style="left:1008.6px;top:281.5px;width:105.2px;height:16.5px;background:#f7f8f9"></div><div class="a" style="left:1008.6px;top:281.5px;width:2.0px;height:16.5px;background:#e5e7ea"></div><div class="t" style="left:861.2px;width:400px;text-align:center;top:286.57px;font-size:7px;color:#3a3a3a;font-weight:normal;">74</div><div class="a" style="left:1119.6px;top:281.5px;width:105.4px;height:16.5px;background:#e2e4e8"></div><div class="t" style="left:972.3px;width:400px;text-align:center;top:286.57px;font-size:7px;color:#2a2a2a;font-weight:normal;">1.610 kr.</div><div class="a" style="left:1230.5px;top:281.5px;width:105.2px;height:16.5px;background:#f7f8f9"></div><div class="t" style="left:1083px;width:400px;text-align:center;top:286.57px;font-size:7px;color:#3a3a3a;font-weight:normal;">4,3</div><div class="a" style="left:1341.9px;top:281.5px;width:104.8px;height:16.5px;background:#f7f8f9"></div><div class="t" style="left:1194.3px;width:400px;text-align:center;top:286.57px;font-size:7px;color:#3a3a3a;font-weight:normal;">45</div><div class="a" style="left:898px;top:310.6px;width:551px;height:49.8px;background:#e6e8ec"></div><div class="t" style="left:752.7px;width:400px;text-align:center;top:321.24px;font-size:7.4px;color:#6f7d8c;font-weight:normal;">Gns. areal</div><div class="t" style="left:752.7px;width:400px;text-align:center;top:335.45px;font-size:14px;color:#34506e;font-weight:bold;">83 m<sup style="font-size:8px;vertical-align:6px">2</sup></div><div class="t" style="left:862.8px;width:400px;text-align:center;top:321.24px;font-size:7.4px;color:#6f7d8c;font-weight:normal;">Antal lejepunkter</div><div class="t" style="left:862.8px;width:400px;text-align:center;top:335.45px;font-size:14px;color:#34506e;font-weight:bold;">3.853</div><div class="t" style="left:972.5px;width:400px;text-align:center;top:321.24px;font-size:7.4px;color:#6f7d8c;font-weight:normal;">Gns. leje pr. m<sup style="font-size:4.5px;vertical-align:3px">2</sup></div><div class="t" style="left:972.5px;width:400px;text-align:center;top:335.45px;font-size:14px;color:#34506e;font-weight:bold;">1.998 kr.</div><div class="t" style="left:1083px;width:400px;text-align:center;top:321.24px;font-size:7.4px;color:#6f7d8c;font-weight:normal;">Gns. antal værelser</div><div class="t" style="left:1083px;width:400px;text-align:center;top:335.45px;font-size:14px;color:#34506e;font-weight:bold;">2,9</div><div class="t" style="left:1193px;width:400px;text-align:center;top:321.24px;font-size:7.4px;color:#6f7d8c;font-weight:normal;">Gns. liggetid (dage)</div><div class="t" style="left:1193px;width:400px;text-align:center;top:335.45px;font-size:14px;color:#34506e;font-weight:bold;">40</div><div class="a" style="left:909px;top:381px;width:72px;height:19px;background:#fff;border-radius:3px 3px 0 0;box-shadow:0 -1px 2px rgba(0,0,0,0.04)"></div><div class="a" style="left:981.7px;top:381px;width:69px;height:18.5px;background:#f1f2f4;border:1px solid #e8eaee;border-bottom:none;border-radius:3px 3px 0 0"></div><div class="a" style="left:1052px;top:381px;width:80px;height:18.5px;background:#f1f2f4;border:1px solid #e8eaee;border-bottom:none;border-radius:3px 3px 0 0"></div><div class="t" style="left:745px;width:400px;text-align:center;top:386.39px;font-size:8.4px;color:#1e1e1e;font-weight:bold;">Scatterplot</div><div class="t" style="left:816.2px;width:400px;text-align:center;top:386.01px;font-size:9.2px;color:#a0a5ad;font-weight:normal;">Lejepunkter</div><div class="t" style="left:891.5px;width:400px;text-align:center;top:385.93px;font-size:9.3px;color:#a0a5ad;font-weight:normal;">Prisudvikling</div><div class="a" style="left:897.5px;top:399.5px;width:551px;height:295px;background:#fff;border-radius:2px;box-shadow:0 1px 4px rgba(0,0,0,0.10)"></div><div class="t" style="left:921px;top:416.20px;font-size:10.75px;color:#3a414d;font-weight:normal;-webkit-text-stroke:0.3px #3a414d">Udvikling over lejepunkter</div><svg class="a" style="left:1422px;top:411px" width="14" height="6" viewBox="0 0 14 6"><circle cx="3" cy="3" r="1.2" fill="#3a3f48"/><circle cx="6.5" cy="3" r="1.2" fill="#3a3f48"/><circle cx="10" cy="3" r="1.2" fill="#3a3f48"/></svg><svg class="a" style="left:0;top:0" width="1600" height="900" viewBox="0 0 1600 900"><line x1="951.0" y1="446" x2="951.0" y2="652.5" stroke="#e9eaed" stroke-width="1"/><line x1="1002.8" y1="446" x2="1002.8" y2="652.5" stroke="#e9eaed" stroke-width="1"/><line x1="1054.6" y1="446" x2="1054.6" y2="652.5" stroke="#e9eaed" stroke-width="1"/><line x1="1106.4" y1="446" x2="1106.4" y2="652.5" stroke="#e9eaed" stroke-width="1"/><line x1="1158.2" y1="446" x2="1158.2" y2="652.5" stroke="#e9eaed" stroke-width="1"/><line x1="1210.0" y1="446" x2="1210.0" y2="652.5" stroke="#e9eaed" stroke-width="1"/><line x1="1261.8" y1="446" x2="1261.8" y2="652.5" stroke="#e9eaed" stroke-width="1"/><line x1="1313.6" y1="446" x2="1313.6" y2="652.5" stroke="#e9eaed" stroke-width="1"/><line x1="1365.4" y1="446" x2="1365.4" y2="652.5" stroke="#e9eaed" stroke-width="1"/><line x1="1417.2" y1="446" x2="1417.2" y2="652.5" stroke="#e9eaed" stroke-width="1"/><line x1="951" y1="652.2" x2="1417" y2="652.2" stroke="#e9eaed" stroke-width="1"/><line x1="951" y1="622.8" x2="1417" y2="622.8" stroke="#e9eaed" stroke-width="1"/><line x1="951" y1="593.3" x2="1417" y2="593.3" stroke="#e9eaed" stroke-width="1"/><line x1="951" y1="563.9" x2="1417" y2="563.9" stroke="#e9eaed" stroke-width="1"/><line x1="951" y1="534.4" x2="1417" y2="534.4" stroke="#e9eaed" stroke-width="1"/><line x1="951" y1="505.0" x2="1417" y2="505.0" stroke="#e9eaed" stroke-width="1"/><line x1="951" y1="475.5" x2="1417" y2="475.5" stroke="#e9eaed" stroke-width="1"/><line x1="951" y1="446.1" x2="1417" y2="446.1" stroke="#e9eaed" stroke-width="1"/><line x1="951" y1="652.7" x2="1417" y2="652.7" stroke="#dcdde1" stroke-width="1.2"/><text x="951.0" y="668" font-size="7.6" fill="#6b7079" text-anchor="middle" font-family="Liberation Sans">20</text><text x="1002.8" y="668" font-size="7.6" fill="#6b7079" text-anchor="middle" font-family="Liberation Sans">40</text><text x="1054.6" y="668" font-size="7.6" fill="#6b7079" text-anchor="middle" font-family="Liberation Sans">60</text><text x="1106.4" y="668" font-size="7.6" fill="#6b7079" text-anchor="middle" font-family="Liberation Sans">80</text><text x="1158.2" y="668" font-size="7.6" fill="#6b7079" text-anchor="middle" font-family="Liberation Sans">100</text><text x="1210.0" y="668" font-size="7.6" fill="#6b7079" text-anchor="middle" font-family="Liberation Sans">120</text><text x="1261.8" y="668" font-size="7.6" fill="#6b7079" text-anchor="middle" font-family="Liberation Sans">140</text><text x="1313.6" y="668" font-size="7.6" fill="#6b7079" text-anchor="middle" font-family="Liberation Sans">160</text><text x="1365.4" y="668" font-size="7.6" fill="#6b7079" text-anchor="middle" font-family="Liberation Sans">180</text><text x="1417.2" y="668" font-size="7.6" fill="#6b7079" text-anchor="middle" font-family="Liberation Sans">200</text><text x="943" y="654.8" font-size="7.6" fill="#5f646c" text-anchor="end" font-family="Liberation Sans">500</text><text x="943" y="625.4" font-size="7.6" fill="#5f646c" text-anchor="end" font-family="Liberation Sans">1,000</text><text x="943" y="595.9" font-size="7.6" fill="#5f646c" text-anchor="end" font-family="Liberation Sans">1,500</text><text x="943" y="566.5" font-size="7.6" fill="#5f646c" text-anchor="end" font-family="Liberation Sans">2,000</text><text x="943" y="537.0" font-size="7.6" fill="#5f646c" text-anchor="end" font-family="Liberation Sans">2,500</text><text x="943" y="507.6" font-size="7.6" fill="#5f646c" text-anchor="end" font-family="Liberation Sans">3,000</text><text x="943" y="478.1" font-size="7.6" fill="#5f646c" text-anchor="end" font-family="Liberation Sans">3,500</text><text x="943" y="448.7" font-size="7.6" fill="#5f646c" text-anchor="end" font-family="Liberation Sans">4,000</text><text x="1173" y="683" font-size="6.5" fill="#7a7f87" text-anchor="middle" font-family="Liberation Sans">Areal</text><text transform="translate(911,565) rotate(-90)" font-size="6" fill="#7a7f87" text-anchor="middle" font-family="Liberation Sans">Leje pr. m²</text><g fill="#687797" fill-opacity="0.9"><circle cx="976.9" cy="560.9" r="2"/><circle cx="976.9" cy="558.0" r="2"/><circle cx="976.9" cy="552.1" r="2"/><circle cx="976.9" cy="549.1" r="2"/><circle cx="976.9" cy="540.3" r="2"/><circle cx="976.9" cy="537.4" r="2"/><circle cx="976.9" cy="531.5" r="2"/><circle cx="976.9" cy="499.1" r="2"/><circle cx="976.9" cy="496.1" r="2"/><circle cx="976.9" cy="487.3" r="2"/><circle cx="979.5" cy="560.9" r="2"/><circle cx="979.5" cy="555.0" r="2"/><circle cx="979.5" cy="552.1" r="2"/><circle cx="979.5" cy="540.3" r="2"/><circle cx="979.5" cy="534.4" r="2"/><circle cx="979.5" cy="528.5" r="2"/><circle cx="979.5" cy="510.9" r="2"/><circle cx="979.5" cy="507.9" r="2"/><circle cx="979.5" cy="502.0" r="2"/><circle cx="979.5" cy="493.2" r="2"/><circle cx="979.5" cy="487.3" r="2"/><circle cx="982.1" cy="555.0" r="2"/><circle cx="982.1" cy="549.1" r="2"/><circle cx="982.1" cy="540.3" r="2"/><circle cx="982.1" cy="537.4" r="2"/><circle cx="982.1" cy="528.5" r="2"/><circle cx="982.1" cy="525.6" r="2"/><circle cx="982.1" cy="510.9" r="2"/><circle cx="982.1" cy="502.0" r="2"/><circle cx="982.1" cy="499.1" r="2"/><circle cx="982.1" cy="496.1" r="2"/><circle cx="982.1" cy="490.3" r="2"/><circle cx="982.1" cy="487.3" r="2"/><circle cx="982.1" cy="484.4" r="2"/><circle cx="984.7" cy="555.0" r="2"/><circle cx="984.7" cy="543.3" r="2"/><circle cx="984.7" cy="537.4" r="2"/><circle cx="984.7" cy="534.4" r="2"/><circle cx="984.7" cy="531.5" r="2"/><circle cx="984.7" cy="528.5" r="2"/><circle cx="984.7" cy="505.0" r="2"/><circle cx="984.7" cy="496.1" r="2"/><circle cx="984.7" cy="493.2" r="2"/><circle cx="984.7" cy="490.3" r="2"/><circle cx="984.7" cy="484.4" r="2"/><circle cx="987.3" cy="490.3" r="2"/><circle cx="989.9" cy="528.5" r="2"/><circle cx="992.4" cy="510.9" r="2"/><circle cx="995.0" cy="578.6" r="2"/><circle cx="995.0" cy="505.0" r="2"/><circle cx="997.6" cy="563.9" r="2"/><circle cx="997.6" cy="525.6" r="2"/><circle cx="997.6" cy="522.6" r="2"/><circle cx="997.6" cy="519.7" r="2"/><circle cx="997.6" cy="513.8" r="2"/><circle cx="997.6" cy="505.0" r="2"/><circle cx="997.6" cy="502.0" r="2"/><circle cx="997.6" cy="499.1" r="2"/><circle cx="997.6" cy="496.1" r="2"/><circle cx="1000.2" cy="534.4" r="2"/><circle cx="1000.2" cy="522.6" r="2"/><circle cx="1000.2" cy="516.8" r="2"/><circle cx="1000.2" cy="513.8" r="2"/><circle cx="1000.2" cy="510.9" r="2"/><circle cx="1000.2" cy="499.1" r="2"/><circle cx="1002.8" cy="531.5" r="2"/><circle cx="1002.8" cy="528.5" r="2"/><circle cx="1002.8" cy="522.6" r="2"/><circle cx="1002.8" cy="516.8" r="2"/><circle cx="1002.8" cy="510.9" r="2"/><circle cx="1002.8" cy="507.9" r="2"/><circle cx="1002.8" cy="499.1" r="2"/><circle cx="1002.8" cy="496.1" r="2"/><circle cx="1002.8" cy="493.2" r="2"/><circle cx="1005.4" cy="522.6" r="2"/><circle cx="1005.4" cy="516.8" r="2"/><circle cx="1005.4" cy="510.9" r="2"/><circle cx="1005.4" cy="507.9" r="2"/><circle cx="1005.4" cy="505.0" r="2"/><circle cx="1005.4" cy="502.0" r="2"/><circle cx="1005.4" cy="496.1" r="2"/><circle cx="1008.0" cy="534.4" r="2"/><circle cx="1008.0" cy="525.6" r="2"/><circle cx="1008.0" cy="516.8" r="2"/><circle cx="1008.0" cy="513.8" r="2"/><circle cx="1008.0" cy="507.9" r="2"/><circle cx="1008.0" cy="505.0" r="2"/><circle cx="1008.0" cy="502.0" r="2"/><circle cx="1010.6" cy="531.5" r="2"/><circle cx="1010.6" cy="519.7" r="2"/><circle cx="1010.6" cy="513.8" r="2"/><circle cx="1010.6" cy="507.9" r="2"/><circle cx="1010.6" cy="505.0" r="2"/><circle cx="1010.6" cy="493.2" r="2"/><circle cx="1010.6" cy="490.3" r="2"/><circle cx="1013.2" cy="519.7" r="2"/><circle cx="1013.2" cy="513.8" r="2"/><circle cx="1013.2" cy="510.9" r="2"/><circle cx="1013.2" cy="507.9" r="2"/><circle cx="1013.2" cy="505.0" r="2"/><circle cx="1013.2" cy="502.0" r="2"/><circle cx="1013.2" cy="490.3" r="2"/><circle cx="1015.8" cy="534.4" r="2"/><circle cx="1015.8" cy="531.5" r="2"/><circle cx="1015.8" cy="525.6" r="2"/><circle cx="1015.8" cy="522.6" r="2"/><circle cx="1015.8" cy="519.7" r="2"/><circle cx="1015.8" cy="516.8" r="2"/><circle cx="1015.8" cy="513.8" r="2"/><circle cx="1015.8" cy="507.9" r="2"/><circle cx="1018.3" cy="537.4" r="2"/><circle cx="1018.3" cy="531.5" r="2"/><circle cx="1018.3" cy="528.5" r="2"/><circle cx="1018.3" cy="525.6" r="2"/><circle cx="1018.3" cy="522.6" r="2"/><circle cx="1018.3" cy="519.7" r="2"/><circle cx="1018.3" cy="516.8" r="2"/><circle cx="1018.3" cy="513.8" r="2"/><circle cx="1018.3" cy="510.9" r="2"/><circle cx="1018.3" cy="507.9" r="2"/><circle cx="1018.3" cy="505.0" r="2"/><circle cx="1018.3" cy="496.1" r="2"/><circle cx="1020.9" cy="525.6" r="2"/><circle cx="1020.9" cy="522.6" r="2"/><circle cx="1020.9" cy="516.8" r="2"/><circle cx="1020.9" cy="513.8" r="2"/><circle cx="1020.9" cy="510.9" r="2"/><circle cx="1020.9" cy="507.9" r="2"/><circle cx="1020.9" cy="505.0" r="2"/><circle cx="1020.9" cy="502.0" r="2"/><circle cx="1020.9" cy="487.3" r="2"/><circle cx="1020.9" cy="472.6" r="2"/><circle cx="1023.5" cy="531.5" r="2"/><circle cx="1023.5" cy="528.5" r="2"/><circle cx="1023.5" cy="525.6" r="2"/><circle cx="1023.5" cy="522.6" r="2"/><circle cx="1023.5" cy="519.7" r="2"/><circle cx="1023.5" cy="516.8" r="2"/><circle cx="1023.5" cy="513.8" r="2"/><circle cx="1023.5" cy="507.9" r="2"/><circle cx="1023.5" cy="505.0" r="2"/><circle cx="1023.5" cy="496.1" r="2"/><circle cx="1026.1" cy="531.5" r="2"/><circle cx="1026.1" cy="528.5" r="2"/><circle cx="1026.1" cy="525.6" r="2"/><circle cx="1026.1" cy="522.6" r="2"/><circle cx="1026.1" cy="519.7" r="2"/><circle cx="1026.1" cy="516.8" r="2"/><circle cx="1026.1" cy="513.8" r="2"/><circle cx="1026.1" cy="510.9" r="2"/><circle cx="1026.1" cy="505.0" r="2"/><circle cx="1026.1" cy="502.0" r="2"/><circle cx="1028.7" cy="528.5" r="2"/><circle cx="1028.7" cy="525.6" r="2"/><circle cx="1028.7" cy="522.6" r="2"/><circle cx="1028.7" cy="519.7" r="2"/><circle cx="1028.7" cy="516.8" r="2"/><circle cx="1028.7" cy="513.8" r="2"/><circle cx="1028.7" cy="507.9" r="2"/><circle cx="1028.7" cy="502.0" r="2"/><circle cx="1028.7" cy="499.1" r="2"/><circle cx="1031.3" cy="540.3" r="2"/><circle cx="1031.3" cy="534.4" r="2"/><circle cx="1031.3" cy="531.5" r="2"/><circle cx="1031.3" cy="525.6" r="2"/><circle cx="1031.3" cy="522.6" r="2"/><circle cx="1031.3" cy="519.7" r="2"/><circle cx="1031.3" cy="516.8" r="2"/><circle cx="1031.3" cy="513.8" r="2"/><circle cx="1031.3" cy="505.0" r="2"/><circle cx="1031.3" cy="502.0" r="2"/><circle cx="1031.3" cy="496.1" r="2"/><circle cx="1033.9" cy="540.3" r="2"/><circle cx="1033.9" cy="537.4" r="2"/><circle cx="1033.9" cy="534.4" r="2"/><circle cx="1033.9" cy="531.5" r="2"/><circle cx="1033.9" cy="528.5" r="2"/><circle cx="1033.9" cy="525.6" r="2"/><circle cx="1033.9" cy="522.6" r="2"/><circle cx="1033.9" cy="519.7" r="2"/><circle cx="1033.9" cy="516.8" r="2"/><circle cx="1033.9" cy="513.8" r="2"/><circle cx="1033.9" cy="510.9" r="2"/><circle cx="1033.9" cy="460.8" r="2"/><circle cx="1033.9" cy="457.9" r="2"/><circle cx="1036.5" cy="537.4" r="2"/><circle cx="1036.5" cy="534.4" r="2"/><circle cx="1036.5" cy="531.5" r="2"/><circle cx="1036.5" cy="528.5" r="2"/><circle cx="1036.5" cy="525.6" r="2"/><circle cx="1036.5" cy="522.6" r="2"/><circle cx="1036.5" cy="513.8" r="2"/><circle cx="1036.5" cy="510.9" r="2"/><circle cx="1039.1" cy="540.3" r="2"/><circle cx="1039.1" cy="534.4" r="2"/><circle cx="1039.1" cy="531.5" r="2"/><circle cx="1039.1" cy="528.5" r="2"/><circle cx="1039.1" cy="525.6" r="2"/><circle cx="1039.1" cy="522.6" r="2"/><circle cx="1039.1" cy="519.7" r="2"/><circle cx="1039.1" cy="516.8" r="2"/><circle cx="1039.1" cy="513.8" r="2"/><circle cx="1039.1" cy="510.9" r="2"/><circle cx="1039.1" cy="505.0" r="2"/><circle cx="1041.7" cy="543.3" r="2"/><circle cx="1041.7" cy="540.3" r="2"/><circle cx="1041.7" cy="537.4" r="2"/><circle cx="1041.7" cy="534.4" r="2"/><circle cx="1041.7" cy="531.5" r="2"/><circle cx="1041.7" cy="528.5" r="2"/><circle cx="1041.7" cy="525.6" r="2"/><circle cx="1041.7" cy="522.6" r="2"/><circle cx="1041.7" cy="519.7" r="2"/><circle cx="1041.7" cy="513.8" r="2"/><circle cx="1041.7" cy="507.9" r="2"/><circle cx="1041.7" cy="490.3" r="2"/><circle cx="1044.2" cy="549.1" r="2"/><circle cx="1044.2" cy="543.3" r="2"/><circle cx="1044.2" cy="540.3" r="2"/><circle cx="1044.2" cy="537.4" r="2"/><circle cx="1044.2" cy="534.4" r="2"/><circle cx="1044.2" cy="531.5" r="2"/><circle cx="1044.2" cy="528.5" r="2"/><circle cx="1044.2" cy="525.6" r="2"/><circle cx="1044.2" cy="522.6" r="2"/><circle cx="1044.2" cy="519.7" r="2"/><circle cx="1044.2" cy="510.9" r="2"/><circle cx="1044.2" cy="505.0" r="2"/><circle cx="1046.8" cy="552.1" r="2"/><circle cx="1046.8" cy="549.1" r="2"/><circle cx="1046.8" cy="543.3" r="2"/><circle cx="1046.8" cy="540.3" r="2"/><circle cx="1046.8" cy="537.4" r="2"/><circle cx="1046.8" cy="534.4" r="2"/><circle cx="1046.8" cy="531.5" r="2"/><circle cx="1046.8" cy="528.5" r="2"/><circle cx="1046.8" cy="525.6" r="2"/><circle cx="1046.8" cy="522.6" r="2"/><circle cx="1046.8" cy="519.7" r="2"/><circle cx="1046.8" cy="513.8" r="2"/><circle cx="1049.4" cy="558.0" r="2"/><circle cx="1049.4" cy="555.0" r="2"/><circle cx="1049.4" cy="552.1" r="2"/><circle cx="1049.4" cy="546.2" r="2"/><circle cx="1049.4" cy="543.3" r="2"/><circle cx="1049.4" cy="540.3" r="2"/><circle cx="1049.4" cy="537.4" r="2"/><circle cx="1049.4" cy="534.4" r="2"/><circle cx="1049.4" cy="531.5" r="2"/><circle cx="1049.4" cy="528.5" r="2"/><circle cx="1049.4" cy="525.6" r="2"/><circle cx="1049.4" cy="522.6" r="2"/><circle cx="1049.4" cy="519.7" r="2"/><circle cx="1049.4" cy="516.8" r="2"/><circle cx="1049.4" cy="513.8" r="2"/><circle cx="1049.4" cy="510.9" r="2"/><circle cx="1049.4" cy="469.6" r="2"/><circle cx="1052.0" cy="555.0" r="2"/><circle cx="1052.0" cy="552.1" r="2"/><circle cx="1052.0" cy="549.1" r="2"/><circle cx="1052.0" cy="546.2" r="2"/><circle cx="1052.0" cy="543.3" r="2"/><circle cx="1052.0" cy="540.3" r="2"/><circle cx="1052.0" cy="537.4" r="2"/><circle cx="1052.0" cy="534.4" r="2"/><circle cx="1052.0" cy="531.5" r="2"/><circle cx="1052.0" cy="528.5" r="2"/><circle cx="1052.0" cy="525.6" r="2"/><circle cx="1052.0" cy="522.6" r="2"/><circle cx="1052.0" cy="519.7" r="2"/><circle cx="1054.6" cy="560.9" r="2"/><circle cx="1054.6" cy="555.0" r="2"/><circle cx="1054.6" cy="552.1" r="2"/><circle cx="1054.6" cy="549.1" r="2"/><circle cx="1054.6" cy="546.2" r="2"/><circle cx="1054.6" cy="543.3" r="2"/><circle cx="1054.6" cy="540.3" r="2"/><circle cx="1054.6" cy="537.4" r="2"/><circle cx="1054.6" cy="534.4" r="2"/><circle cx="1054.6" cy="531.5" r="2"/><circle cx="1054.6" cy="528.5" r="2"/><circle cx="1054.6" cy="525.6" r="2"/><circle cx="1054.6" cy="519.7" r="2"/><circle cx="1054.6" cy="516.8" r="2"/><circle cx="1054.6" cy="510.9" r="2"/><circle cx="1057.2" cy="566.8" r="2"/><circle cx="1057.2" cy="555.0" r="2"/><circle cx="1057.2" cy="552.1" r="2"/><circle cx="1057.2" cy="549.1" r="2"/><circle cx="1057.2" cy="546.2" r="2"/><circle cx="1057.2" cy="543.3" r="2"/><circle cx="1057.2" cy="540.3" r="2"/><circle cx="1057.2" cy="537.4" r="2"/><circle cx="1057.2" cy="534.4" r="2"/><circle cx="1057.2" cy="531.5" r="2"/><circle cx="1057.2" cy="528.5" r="2"/><circle cx="1057.2" cy="525.6" r="2"/><circle cx="1059.8" cy="560.9" r="2"/><circle cx="1059.8" cy="555.0" r="2"/><circle cx="1059.8" cy="552.1" r="2"/><circle cx="1059.8" cy="549.1" r="2"/><circle cx="1059.8" cy="546.2" r="2"/><circle cx="1059.8" cy="543.3" r="2"/><circle cx="1059.8" cy="540.3" r="2"/><circle cx="1059.8" cy="537.4" r="2"/><circle cx="1059.8" cy="534.4" r="2"/><circle cx="1059.8" cy="531.5" r="2"/><circle cx="1059.8" cy="528.5" r="2"/><circle cx="1059.8" cy="525.6" r="2"/><circle cx="1059.8" cy="522.6" r="2"/><circle cx="1062.4" cy="555.0" r="2"/><circle cx="1062.4" cy="549.1" r="2"/><circle cx="1062.4" cy="546.2" r="2"/><circle cx="1062.4" cy="543.3" r="2"/><circle cx="1062.4" cy="540.3" r="2"/><circle cx="1062.4" cy="537.4" r="2"/><circle cx="1062.4" cy="534.4" r="2"/><circle cx="1062.4" cy="531.5" r="2"/><circle cx="1062.4" cy="528.5" r="2"/><circle cx="1062.4" cy="525.6" r="2"/><circle cx="1062.4" cy="522.6" r="2"/><circle cx="1062.4" cy="519.7" r="2"/><circle cx="1062.4" cy="516.8" r="2"/><circle cx="1065.0" cy="563.9" r="2"/><circle cx="1065.0" cy="560.9" r="2"/><circle cx="1065.0" cy="558.0" r="2"/><circle cx="1065.0" cy="555.0" r="2"/><circle cx="1065.0" cy="552.1" r="2"/><circle cx="1065.0" cy="549.1" r="2"/><circle cx="1065.0" cy="546.2" r="2"/><circle cx="1065.0" cy="543.3" r="2"/><circle cx="1065.0" cy="540.3" r="2"/><circle cx="1065.0" cy="537.4" r="2"/><circle cx="1065.0" cy="534.4" r="2"/><circle cx="1065.0" cy="531.5" r="2"/><circle cx="1065.0" cy="528.5" r="2"/><circle cx="1067.5" cy="590.4" r="2"/><circle cx="1067.5" cy="566.8" r="2"/><circle cx="1067.5" cy="563.9" r="2"/><circle cx="1067.5" cy="558.0" r="2"/><circle cx="1067.5" cy="555.0" r="2"/><circle cx="1067.5" cy="552.1" r="2"/><circle cx="1067.5" cy="549.1" r="2"/><circle cx="1067.5" cy="546.2" r="2"/><circle cx="1067.5" cy="543.3" r="2"/><circle cx="1067.5" cy="540.3" r="2"/><circle cx="1067.5" cy="537.4" r="2"/><circle cx="1067.5" cy="534.4" r="2"/><circle cx="1067.5" cy="531.5" r="2"/><circle cx="1067.5" cy="528.5" r="2"/><circle cx="1067.5" cy="525.6" r="2"/><circle cx="1067.5" cy="519.7" r="2"/><circle cx="1067.5" cy="499.1" r="2"/><circle cx="1070.1" cy="593.3" r="2"/><circle cx="1070.1" cy="566.8" r="2"/><circle cx="1070.1" cy="563.9" r="2"/><circle cx="1070.1" cy="560.9" r="2"/><circle cx="1070.1" cy="558.0" r="2"/><circle cx="1070.1" cy="555.0" r="2"/><circle cx="1070.1" cy="552.1" r="2"/><circle cx="1070.1" cy="549.1" r="2"/><circle cx="1070.1" cy="546.2" r="2"/><circle cx="1070.1" cy="543.3" r="2"/><circle cx="1070.1" cy="540.3" r="2"/><circle cx="1070.1" cy="537.4" r="2"/><circle cx="1070.1" cy="534.4" r="2"/><circle cx="1070.1" cy="531.5" r="2"/><circle cx="1070.1" cy="528.5" r="2"/><circle cx="1070.1" cy="522.6" r="2"/><circle cx="1070.1" cy="519.7" r="2"/><circle cx="1072.7" cy="569.8" r="2"/><circle cx="1072.7" cy="563.9" r="2"/><circle cx="1072.7" cy="555.0" r="2"/><circle cx="1072.7" cy="552.1" r="2"/><circle cx="1072.7" cy="549.1" r="2"/><circle cx="1072.7" cy="546.2" r="2"/><circle cx="1072.7" cy="543.3" r="2"/><circle cx="1072.7" cy="540.3" r="2"/><circle cx="1072.7" cy="537.4" r="2"/><circle cx="1072.7" cy="534.4" r="2"/><circle cx="1072.7" cy="531.5" r="2"/><circle cx="1072.7" cy="519.7" r="2"/><circle cx="1075.3" cy="560.9" r="2"/><circle cx="1075.3" cy="558.0" r="2"/><circle cx="1075.3" cy="555.0" r="2"/><circle cx="1075.3" cy="552.1" r="2"/><circle cx="1075.3" cy="549.1" r="2"/><circle cx="1075.3" cy="546.2" r="2"/><circle cx="1075.3" cy="543.3" r="2"/><circle cx="1075.3" cy="540.3" r="2"/><circle cx="1075.3" cy="537.4" r="2"/><circle cx="1075.3" cy="534.4" r="2"/><circle cx="1075.3" cy="531.5" r="2"/><circle cx="1075.3" cy="528.5" r="2"/><circle cx="1075.3" cy="516.8" r="2"/><circle cx="1075.3" cy="513.8" r="2"/><circle cx="1077.9" cy="566.8" r="2"/><circle cx="1077.9" cy="560.9" r="2"/><circle cx="1077.9" cy="558.0" r="2"/><circle cx="1077.9" cy="555.0" r="2"/><circle cx="1077.9" cy="552.1" r="2"/><circle cx="1077.9" cy="549.1" r="2"/><circle cx="1077.9" cy="546.2" r="2"/><circle cx="1077.9" cy="543.3" r="2"/><circle cx="1077.9" cy="540.3" r="2"/><circle cx="1077.9" cy="537.4" r="2"/><circle cx="1077.9" cy="534.4" r="2"/><circle cx="1080.5" cy="569.8" r="2"/><circle cx="1080.5" cy="566.8" r="2"/><circle cx="1080.5" cy="563.9" r="2"/><circle cx="1080.5" cy="560.9" r="2"/><circle cx="1080.5" cy="558.0" r="2"/><circle cx="1080.5" cy="555.0" r="2"/><circle cx="1080.5" cy="552.1" r="2"/><circle cx="1080.5" cy="549.1" r="2"/><circle cx="1080.5" cy="546.2" r="2"/><circle cx="1080.5" cy="543.3" r="2"/><circle cx="1080.5" cy="540.3" r="2"/><circle cx="1080.5" cy="537.4" r="2"/><circle cx="1083.1" cy="566.8" r="2"/><circle cx="1083.1" cy="563.9" r="2"/><circle cx="1083.1" cy="560.9" r="2"/><circle cx="1083.1" cy="558.0" r="2"/><circle cx="1083.1" cy="555.0" r="2"/><circle cx="1083.1" cy="552.1" r="2"/><circle cx="1083.1" cy="549.1" r="2"/><circle cx="1083.1" cy="546.2" r="2"/><circle cx="1083.1" cy="543.3" r="2"/><circle cx="1083.1" cy="540.3" r="2"/><circle cx="1083.1" cy="537.4" r="2"/><circle cx="1085.7" cy="596.3" r="2"/><circle cx="1085.7" cy="572.7" r="2"/><circle cx="1085.7" cy="566.8" r="2"/><circle cx="1085.7" cy="563.9" r="2"/><circle cx="1085.7" cy="560.9" r="2"/><circle cx="1085.7" cy="558.0" r="2"/><circle cx="1085.7" cy="555.0" r="2"/><circle cx="1085.7" cy="552.1" r="2"/><circle cx="1085.7" cy="549.1" r="2"/><circle cx="1085.7" cy="546.2" r="2"/><circle cx="1085.7" cy="543.3" r="2"/><circle cx="1085.7" cy="540.3" r="2"/><circle cx="1085.7" cy="528.5" r="2"/><circle cx="1088.3" cy="587.4" r="2"/><circle cx="1088.3" cy="572.7" r="2"/><circle cx="1088.3" cy="569.8" r="2"/><circle cx="1088.3" cy="566.8" r="2"/><circle cx="1088.3" cy="563.9" r="2"/><circle cx="1088.3" cy="560.9" r="2"/><circle cx="1088.3" cy="558.0" r="2"/><circle cx="1088.3" cy="555.0" r="2"/><circle cx="1088.3" cy="552.1" r="2"/><circle cx="1088.3" cy="549.1" r="2"/><circle cx="1088.3" cy="546.2" r="2"/><circle cx="1088.3" cy="543.3" r="2"/><circle cx="1088.3" cy="537.4" r="2"/><circle cx="1088.3" cy="534.4" r="2"/><circle cx="1088.3" cy="531.5" r="2"/><circle cx="1090.9" cy="566.8" r="2"/><circle cx="1090.9" cy="563.9" r="2"/><circle cx="1090.9" cy="560.9" r="2"/><circle cx="1090.9" cy="558.0" r="2"/><circle cx="1090.9" cy="555.0" r="2"/><circle cx="1090.9" cy="552.1" r="2"/><circle cx="1090.9" cy="549.1" r="2"/><circle cx="1090.9" cy="546.2" r="2"/><circle cx="1090.9" cy="543.3" r="2"/><circle cx="1090.9" cy="540.3" r="2"/><circle cx="1093.5" cy="572.7" r="2"/><circle cx="1093.5" cy="569.8" r="2"/><circle cx="1093.5" cy="566.8" r="2"/><circle cx="1093.5" cy="563.9" r="2"/><circle cx="1093.5" cy="560.9" r="2"/><circle cx="1093.5" cy="558.0" r="2"/><circle cx="1093.5" cy="555.0" r="2"/><circle cx="1093.5" cy="552.1" r="2"/><circle cx="1093.5" cy="549.1" r="2"/><circle cx="1093.5" cy="546.2" r="2"/><circle cx="1093.5" cy="543.3" r="2"/><circle cx="1093.5" cy="540.3" r="2"/><circle cx="1093.5" cy="537.4" r="2"/><circle cx="1096.0" cy="581.5" r="2"/><circle cx="1096.0" cy="575.6" r="2"/><circle cx="1096.0" cy="572.7" r="2"/><circle cx="1096.0" cy="569.8" r="2"/><circle cx="1096.0" cy="566.8" r="2"/><circle cx="1096.0" cy="563.9" r="2"/><circle cx="1096.0" cy="560.9" r="2"/><circle cx="1096.0" cy="558.0" r="2"/><circle cx="1096.0" cy="555.0" r="2"/><circle cx="1096.0" cy="552.1" r="2"/><circle cx="1096.0" cy="549.1" r="2"/><circle cx="1096.0" cy="546.2" r="2"/><circle cx="1096.0" cy="543.3" r="2"/><circle cx="1096.0" cy="537.4" r="2"/><circle cx="1098.6" cy="572.7" r="2"/><circle cx="1098.6" cy="569.8" r="2"/><circle cx="1098.6" cy="566.8" r="2"/><circle cx="1098.6" cy="563.9" r="2"/><circle cx="1098.6" cy="560.9" r="2"/><circle cx="1098.6" cy="558.0" r="2"/><circle cx="1098.6" cy="555.0" r="2"/><circle cx="1098.6" cy="552.1" r="2"/><circle cx="1098.6" cy="549.1" r="2"/><circle cx="1098.6" cy="543.3" r="2"/><circle cx="1098.6" cy="540.3" r="2"/><circle cx="1098.6" cy="537.4" r="2"/><circle cx="1101.2" cy="581.5" r="2"/><circle cx="1101.2" cy="578.6" r="2"/><circle cx="1101.2" cy="575.6" r="2"/><circle cx="1101.2" cy="569.8" r="2"/><circle cx="1101.2" cy="566.8" r="2"/><circle cx="1101.2" cy="563.9" r="2"/><circle cx="1101.2" cy="560.9" r="2"/><circle cx="1101.2" cy="558.0" r="2"/><circle cx="1101.2" cy="555.0" r="2"/><circle cx="1101.2" cy="552.1" r="2"/><circle cx="1101.2" cy="549.1" r="2"/><circle cx="1101.2" cy="546.2" r="2"/><circle cx="1101.2" cy="543.3" r="2"/><circle cx="1101.2" cy="540.3" r="2"/><circle cx="1103.8" cy="590.4" r="2"/><circle cx="1103.8" cy="584.5" r="2"/><circle cx="1103.8" cy="578.6" r="2"/><circle cx="1103.8" cy="575.6" r="2"/><circle cx="1103.8" cy="572.7" r="2"/><circle cx="1103.8" cy="569.8" r="2"/><circle cx="1103.8" cy="566.8" r="2"/><circle cx="1103.8" cy="563.9" r="2"/><circle cx="1103.8" cy="560.9" r="2"/><circle cx="1103.8" cy="558.0" r="2"/><circle cx="1103.8" cy="555.0" r="2"/><circle cx="1103.8" cy="552.1" r="2"/><circle cx="1103.8" cy="549.1" r="2"/><circle cx="1103.8" cy="546.2" r="2"/><circle cx="1106.4" cy="581.5" r="2"/><circle cx="1106.4" cy="575.6" r="2"/><circle cx="1106.4" cy="572.7" r="2"/><circle cx="1106.4" cy="569.8" r="2"/><circle cx="1106.4" cy="566.8" r="2"/><circle cx="1106.4" cy="563.9" r="2"/><circle cx="1106.4" cy="560.9" r="2"/><circle cx="1106.4" cy="558.0" r="2"/><circle cx="1106.4" cy="555.0" r="2"/><circle cx="1106.4" cy="552.1" r="2"/><circle cx="1106.4" cy="549.1" r="2"/><circle cx="1106.4" cy="546.2" r="2"/><circle cx="1106.4" cy="543.3" r="2"/><circle cx="1109.0" cy="593.3" r="2"/><circle cx="1109.0" cy="584.5" r="2"/><circle cx="1109.0" cy="578.6" r="2"/><circle cx="1109.0" cy="575.6" r="2"/><circle cx="1109.0" cy="569.8" r="2"/><circle cx="1109.0" cy="566.8" r="2"/><circle cx="1109.0" cy="563.9" r="2"/><circle cx="1109.0" cy="560.9" r="2"/><circle cx="1109.0" cy="558.0" r="2"/><circle cx="1109.0" cy="555.0" r="2"/><circle cx="1109.0" cy="552.1" r="2"/><circle cx="1109.0" cy="549.1" r="2"/><circle cx="1109.0" cy="546.2" r="2"/><circle cx="1109.0" cy="543.3" r="2"/><circle cx="1109.0" cy="540.3" r="2"/><circle cx="1109.0" cy="531.5" r="2"/><circle cx="1111.6" cy="587.4" r="2"/><circle cx="1111.6" cy="578.6" r="2"/><circle cx="1111.6" cy="575.6" r="2"/><circle cx="1111.6" cy="572.7" r="2"/><circle cx="1111.6" cy="569.8" r="2"/><circle cx="1111.6" cy="566.8" r="2"/><circle cx="1111.6" cy="563.9" r="2"/><circle cx="1111.6" cy="560.9" r="2"/><circle cx="1111.6" cy="558.0" r="2"/><circle cx="1111.6" cy="555.0" r="2"/><circle cx="1111.6" cy="549.1" r="2"/><circle cx="1111.6" cy="543.3" r="2"/><circle cx="1111.6" cy="540.3" r="2"/><circle cx="1111.6" cy="537.4" r="2"/><circle cx="1114.2" cy="575.6" r="2"/><circle cx="1114.2" cy="572.7" r="2"/><circle cx="1114.2" cy="569.8" r="2"/><circle cx="1114.2" cy="566.8" r="2"/><circle cx="1114.2" cy="563.9" r="2"/><circle cx="1114.2" cy="560.9" r="2"/><circle cx="1114.2" cy="558.0" r="2"/><circle cx="1114.2" cy="555.0" r="2"/><circle cx="1114.2" cy="552.1" r="2"/><circle cx="1114.2" cy="549.1" r="2"/><circle cx="1116.8" cy="596.3" r="2"/><circle cx="1116.8" cy="581.5" r="2"/><circle cx="1116.8" cy="578.6" r="2"/><circle cx="1116.8" cy="575.6" r="2"/><circle cx="1116.8" cy="572.7" r="2"/><circle cx="1116.8" cy="569.8" r="2"/><circle cx="1116.8" cy="566.8" r="2"/><circle cx="1116.8" cy="563.9" r="2"/><circle cx="1116.8" cy="560.9" r="2"/><circle cx="1116.8" cy="558.0" r="2"/><circle cx="1116.8" cy="555.0" r="2"/><circle cx="1116.8" cy="552.1" r="2"/><circle cx="1116.8" cy="549.1" r="2"/><circle cx="1116.8" cy="546.2" r="2"/><circle cx="1119.3" cy="599.2" r="2"/><circle cx="1119.3" cy="593.3" r="2"/><circle cx="1119.3" cy="587.4" r="2"/><circle cx="1119.3" cy="584.5" r="2"/><circle cx="1119.3" cy="581.5" r="2"/><circle cx="1119.3" cy="575.6" r="2"/><circle cx="1119.3" cy="572.7" r="2"/><circle cx="1119.3" cy="569.8" r="2"/><circle cx="1119.3" cy="566.8" r="2"/><circle cx="1119.3" cy="563.9" r="2"/><circle cx="1119.3" cy="560.9" r="2"/><circle cx="1119.3" cy="558.0" r="2"/><circle cx="1119.3" cy="552.1" r="2"/><circle cx="1119.3" cy="546.2" r="2"/><circle cx="1119.3" cy="543.3" r="2"/><circle cx="1121.9" cy="584.5" r="2"/><circle cx="1121.9" cy="581.5" r="2"/><circle cx="1121.9" cy="578.6" r="2"/><circle cx="1121.9" cy="575.6" r="2"/><circle cx="1121.9" cy="572.7" r="2"/><circle cx="1121.9" cy="569.8" r="2"/><circle cx="1121.9" cy="566.8" r="2"/><circle cx="1121.9" cy="563.9" r="2"/><circle cx="1121.9" cy="560.9" r="2"/><circle cx="1121.9" cy="558.0" r="2"/><circle cx="1121.9" cy="555.0" r="2"/><circle cx="1121.9" cy="549.1" r="2"/><circle cx="1121.9" cy="546.2" r="2"/><circle cx="1121.9" cy="528.5" r="2"/><circle cx="1124.5" cy="596.3" r="2"/><circle cx="1124.5" cy="587.4" r="2"/><circle cx="1124.5" cy="584.5" r="2"/><circle cx="1124.5" cy="581.5" r="2"/><circle cx="1124.5" cy="578.6" r="2"/><circle cx="1124.5" cy="575.6" r="2"/><circle cx="1124.5" cy="572.7" r="2"/><circle cx="1124.5" cy="569.8" r="2"/><circle cx="1124.5" cy="566.8" r="2"/><circle cx="1124.5" cy="563.9" r="2"/><circle cx="1124.5" cy="560.9" r="2"/><circle cx="1124.5" cy="558.0" r="2"/><circle cx="1124.5" cy="555.0" r="2"/><circle cx="1124.5" cy="552.1" r="2"/><circle cx="1124.5" cy="549.1" r="2"/><circle cx="1124.5" cy="537.4" r="2"/><circle cx="1127.1" cy="590.4" r="2"/><circle cx="1127.1" cy="587.4" r="2"/><circle cx="1127.1" cy="581.5" r="2"/><circle cx="1127.1" cy="578.6" r="2"/><circle cx="1127.1" cy="575.6" r="2"/><circle cx="1127.1" cy="572.7" r="2"/><circle cx="1127.1" cy="569.8" r="2"/><circle cx="1127.1" cy="566.8" r="2"/><circle cx="1127.1" cy="563.9" r="2"/><circle cx="1127.1" cy="560.9" r="2"/><circle cx="1127.1" cy="558.0" r="2"/><circle cx="1127.1" cy="555.0" r="2"/><circle cx="1127.1" cy="552.1" r="2"/><circle cx="1127.1" cy="549.1" r="2"/><circle cx="1127.1" cy="546.2" r="2"/><circle cx="1127.1" cy="540.3" r="2"/><circle cx="1129.7" cy="581.5" r="2"/><circle cx="1129.7" cy="578.6" r="2"/><circle cx="1129.7" cy="575.6" r="2"/><circle cx="1129.7" cy="572.7" r="2"/><circle cx="1129.7" cy="569.8" r="2"/><circle cx="1129.7" cy="566.8" r="2"/><circle cx="1129.7" cy="560.9" r="2"/><circle cx="1129.7" cy="558.0" r="2"/><circle cx="1129.7" cy="555.0" r="2"/><circle cx="1129.7" cy="552.1" r="2"/><circle cx="1129.7" cy="549.1" r="2"/><circle cx="1129.7" cy="546.2" r="2"/><circle cx="1132.3" cy="602.1" r="2"/><circle cx="1132.3" cy="587.4" r="2"/><circle cx="1132.3" cy="584.5" r="2"/><circle cx="1132.3" cy="581.5" r="2"/><circle cx="1132.3" cy="578.6" r="2"/><circle cx="1132.3" cy="575.6" r="2"/><circle cx="1132.3" cy="572.7" r="2"/><circle cx="1132.3" cy="569.8" r="2"/><circle cx="1132.3" cy="566.8" r="2"/><circle cx="1132.3" cy="563.9" r="2"/><circle cx="1132.3" cy="560.9" r="2"/><circle cx="1132.3" cy="558.0" r="2"/><circle cx="1132.3" cy="555.0" r="2"/><circle cx="1132.3" cy="552.1" r="2"/><circle cx="1132.3" cy="549.1" r="2"/><circle cx="1134.9" cy="596.3" r="2"/><circle cx="1134.9" cy="584.5" r="2"/><circle cx="1134.9" cy="581.5" r="2"/><circle cx="1134.9" cy="578.6" r="2"/><circle cx="1134.9" cy="575.6" r="2"/><circle cx="1134.9" cy="572.7" r="2"/><circle cx="1134.9" cy="569.8" r="2"/><circle cx="1134.9" cy="566.8" r="2"/><circle cx="1134.9" cy="563.9" r="2"/><circle cx="1134.9" cy="560.9" r="2"/><circle cx="1134.9" cy="558.0" r="2"/><circle cx="1134.9" cy="552.1" r="2"/><circle cx="1134.9" cy="549.1" r="2"/><circle cx="1134.9" cy="546.2" r="2"/><circle cx="1134.9" cy="537.4" r="2"/><circle cx="1137.5" cy="584.5" r="2"/><circle cx="1137.5" cy="581.5" r="2"/><circle cx="1137.5" cy="578.6" r="2"/><circle cx="1137.5" cy="575.6" r="2"/><circle cx="1137.5" cy="572.7" r="2"/><circle cx="1137.5" cy="569.8" r="2"/><circle cx="1137.5" cy="566.8" r="2"/><circle cx="1137.5" cy="563.9" r="2"/><circle cx="1137.5" cy="560.9" r="2"/><circle cx="1137.5" cy="558.0" r="2"/><circle cx="1137.5" cy="555.0" r="2"/><circle cx="1137.5" cy="552.1" r="2"/><circle cx="1137.5" cy="546.2" r="2"/><circle cx="1137.5" cy="540.3" r="2"/><circle cx="1140.1" cy="616.9" r="2"/><circle cx="1140.1" cy="590.4" r="2"/><circle cx="1140.1" cy="587.4" r="2"/><circle cx="1140.1" cy="584.5" r="2"/><circle cx="1140.1" cy="581.5" r="2"/><circle cx="1140.1" cy="578.6" r="2"/><circle cx="1140.1" cy="575.6" r="2"/><circle cx="1140.1" cy="572.7" r="2"/><circle cx="1140.1" cy="569.8" r="2"/><circle cx="1140.1" cy="566.8" r="2"/><circle cx="1140.1" cy="563.9" r="2"/><circle cx="1140.1" cy="560.9" r="2"/><circle cx="1140.1" cy="558.0" r="2"/><circle cx="1140.1" cy="555.0" r="2"/><circle cx="1140.1" cy="552.1" r="2"/><circle cx="1140.1" cy="549.1" r="2"/><circle cx="1140.1" cy="540.3" r="2"/><circle cx="1142.7" cy="596.3" r="2"/><circle cx="1142.7" cy="593.3" r="2"/><circle cx="1142.7" cy="590.4" r="2"/><circle cx="1142.7" cy="584.5" r="2"/><circle cx="1142.7" cy="581.5" r="2"/><circle cx="1142.7" cy="578.6" r="2"/><circle cx="1142.7" cy="575.6" r="2"/><circle cx="1142.7" cy="572.7" r="2"/><circle cx="1142.7" cy="569.8" r="2"/><circle cx="1142.7" cy="566.8" r="2"/><circle cx="1142.7" cy="563.9" r="2"/><circle cx="1142.7" cy="560.9" r="2"/><circle cx="1142.7" cy="558.0" r="2"/><circle cx="1142.7" cy="555.0" r="2"/><circle cx="1142.7" cy="549.1" r="2"/><circle cx="1145.2" cy="587.4" r="2"/><circle cx="1145.2" cy="584.5" r="2"/><circle cx="1145.2" cy="578.6" r="2"/><circle cx="1145.2" cy="575.6" r="2"/><circle cx="1145.2" cy="572.7" r="2"/><circle cx="1145.2" cy="569.8" r="2"/><circle cx="1145.2" cy="566.8" r="2"/><circle cx="1145.2" cy="563.9" r="2"/><circle cx="1145.2" cy="560.9" r="2"/><circle cx="1145.2" cy="558.0" r="2"/><circle cx="1145.2" cy="552.1" r="2"/><circle cx="1147.8" cy="616.9" r="2"/><circle cx="1147.8" cy="590.4" r="2"/><circle cx="1147.8" cy="581.5" r="2"/><circle cx="1147.8" cy="578.6" r="2"/><circle cx="1147.8" cy="575.6" r="2"/><circle cx="1147.8" cy="572.7" r="2"/><circle cx="1147.8" cy="569.8" r="2"/><circle cx="1147.8" cy="566.8" r="2"/><circle cx="1147.8" cy="563.9" r="2"/><circle cx="1147.8" cy="560.9" r="2"/><circle cx="1147.8" cy="558.0" r="2"/><circle cx="1147.8" cy="555.0" r="2"/><circle cx="1147.8" cy="549.1" r="2"/><circle cx="1147.8" cy="546.2" r="2"/><circle cx="1150.4" cy="602.1" r="2"/><circle cx="1150.4" cy="596.3" r="2"/><circle cx="1150.4" cy="590.4" r="2"/><circle cx="1150.4" cy="587.4" r="2"/><circle cx="1150.4" cy="584.5" r="2"/><circle cx="1150.4" cy="578.6" r="2"/><circle cx="1150.4" cy="575.6" r="2"/><circle cx="1150.4" cy="572.7" r="2"/><circle cx="1150.4" cy="569.8" r="2"/><circle cx="1150.4" cy="566.8" r="2"/><circle cx="1150.4" cy="563.9" r="2"/><circle cx="1150.4" cy="560.9" r="2"/><circle cx="1150.4" cy="558.0" r="2"/><circle cx="1150.4" cy="555.0" r="2"/><circle cx="1150.4" cy="552.1" r="2"/><circle cx="1150.4" cy="549.1" r="2"/><circle cx="1153.0" cy="587.4" r="2"/><circle cx="1153.0" cy="581.5" r="2"/><circle cx="1153.0" cy="578.6" r="2"/><circle cx="1153.0" cy="575.6" r="2"/><circle cx="1153.0" cy="572.7" r="2"/><circle cx="1153.0" cy="569.8" r="2"/><circle cx="1153.0" cy="566.8" r="2"/><circle cx="1153.0" cy="563.9" r="2"/><circle cx="1153.0" cy="560.9" r="2"/><circle cx="1153.0" cy="558.0" r="2"/><circle cx="1153.0" cy="555.0" r="2"/><circle cx="1153.0" cy="549.1" r="2"/><circle cx="1153.0" cy="546.2" r="2"/><circle cx="1155.6" cy="596.3" r="2"/><circle cx="1155.6" cy="587.4" r="2"/><circle cx="1155.6" cy="584.5" r="2"/><circle cx="1155.6" cy="581.5" r="2"/><circle cx="1155.6" cy="578.6" r="2"/><circle cx="1155.6" cy="575.6" r="2"/><circle cx="1155.6" cy="572.7" r="2"/><circle cx="1155.6" cy="569.8" r="2"/><circle cx="1155.6" cy="566.8" r="2"/><circle cx="1155.6" cy="563.9" r="2"/><circle cx="1155.6" cy="560.9" r="2"/><circle cx="1155.6" cy="558.0" r="2"/><circle cx="1155.6" cy="555.0" r="2"/><circle cx="1155.6" cy="552.1" r="2"/><circle cx="1158.2" cy="611.0" r="2"/><circle cx="1158.2" cy="590.4" r="2"/><circle cx="1158.2" cy="587.4" r="2"/><circle cx="1158.2" cy="575.6" r="2"/><circle cx="1158.2" cy="572.7" r="2"/><circle cx="1158.2" cy="569.8" r="2"/><circle cx="1158.2" cy="566.8" r="2"/><circle cx="1158.2" cy="563.9" r="2"/><circle cx="1158.2" cy="560.9" r="2"/><circle cx="1158.2" cy="558.0" r="2"/><circle cx="1158.2" cy="555.0" r="2"/><circle cx="1158.2" cy="552.1" r="2"/><circle cx="1158.2" cy="549.1" r="2"/><circle cx="1158.2" cy="546.2" r="2"/><circle cx="1160.8" cy="587.4" r="2"/><circle cx="1160.8" cy="584.5" r="2"/><circle cx="1160.8" cy="581.5" r="2"/><circle cx="1160.8" cy="578.6" r="2"/><circle cx="1160.8" cy="575.6" r="2"/><circle cx="1160.8" cy="572.7" r="2"/><circle cx="1160.8" cy="569.8" r="2"/><circle cx="1160.8" cy="566.8" r="2"/><circle cx="1160.8" cy="563.9" r="2"/><circle cx="1160.8" cy="560.9" r="2"/><circle cx="1160.8" cy="558.0" r="2"/><circle cx="1160.8" cy="555.0" r="2"/><circle cx="1160.8" cy="552.1" r="2"/><circle cx="1163.4" cy="593.3" r="2"/><circle cx="1163.4" cy="590.4" r="2"/><circle cx="1163.4" cy="587.4" r="2"/><circle cx="1163.4" cy="584.5" r="2"/><circle cx="1163.4" cy="581.5" r="2"/><circle cx="1163.4" cy="575.6" r="2"/><circle cx="1163.4" cy="572.7" r="2"/><circle cx="1163.4" cy="569.8" r="2"/><circle cx="1163.4" cy="566.8" r="2"/><circle cx="1163.4" cy="563.9" r="2"/><circle cx="1163.4" cy="560.9" r="2"/><circle cx="1163.4" cy="558.0" r="2"/><circle cx="1163.4" cy="543.3" r="2"/><circle cx="1166.0" cy="611.0" r="2"/><circle cx="1166.0" cy="599.2" r="2"/><circle cx="1166.0" cy="596.3" r="2"/><circle cx="1166.0" cy="593.3" r="2"/><circle cx="1166.0" cy="587.4" r="2"/><circle cx="1166.0" cy="584.5" r="2"/><circle cx="1166.0" cy="581.5" r="2"/><circle cx="1166.0" cy="578.6" r="2"/><circle cx="1166.0" cy="575.6" r="2"/><circle cx="1166.0" cy="572.7" r="2"/><circle cx="1166.0" cy="569.8" r="2"/><circle cx="1166.0" cy="566.8" r="2"/><circle cx="1166.0" cy="563.9" r="2"/><circle cx="1166.0" cy="558.0" r="2"/><circle cx="1166.0" cy="543.3" r="2"/><circle cx="1166.0" cy="502.0" r="2"/><circle cx="1168.6" cy="608.0" r="2"/><circle cx="1168.6" cy="599.2" r="2"/><circle cx="1168.6" cy="596.3" r="2"/><circle cx="1168.6" cy="587.4" r="2"/><circle cx="1168.6" cy="584.5" r="2"/><circle cx="1168.6" cy="581.5" r="2"/><circle cx="1168.6" cy="575.6" r="2"/><circle cx="1168.6" cy="572.7" r="2"/><circle cx="1168.6" cy="569.8" r="2"/><circle cx="1168.6" cy="566.8" r="2"/><circle cx="1168.6" cy="563.9" r="2"/><circle cx="1168.6" cy="560.9" r="2"/><circle cx="1168.6" cy="558.0" r="2"/><circle cx="1171.2" cy="602.1" r="2"/><circle cx="1171.2" cy="596.3" r="2"/><circle cx="1171.2" cy="590.4" r="2"/><circle cx="1171.2" cy="587.4" r="2"/><circle cx="1171.2" cy="584.5" r="2"/><circle cx="1171.2" cy="581.5" r="2"/><circle cx="1171.2" cy="578.6" r="2"/><circle cx="1171.2" cy="572.7" r="2"/><circle cx="1171.2" cy="569.8" r="2"/><circle cx="1171.2" cy="566.8" r="2"/><circle cx="1171.2" cy="563.9" r="2"/><circle cx="1171.2" cy="558.0" r="2"/><circle cx="1171.2" cy="543.3" r="2"/><circle cx="1171.2" cy="540.3" r="2"/><circle cx="1173.7" cy="593.3" r="2"/><circle cx="1173.7" cy="590.4" r="2"/><circle cx="1173.7" cy="587.4" r="2"/><circle cx="1173.7" cy="581.5" r="2"/><circle cx="1173.7" cy="578.6" r="2"/><circle cx="1173.7" cy="575.6" r="2"/><circle cx="1173.7" cy="572.7" r="2"/><circle cx="1173.7" cy="569.8" r="2"/><circle cx="1173.7" cy="566.8" r="2"/><circle cx="1173.7" cy="563.9" r="2"/><circle cx="1173.7" cy="560.9" r="2"/><circle cx="1173.7" cy="558.0" r="2"/><circle cx="1173.7" cy="549.1" r="2"/><circle cx="1176.3" cy="590.4" r="2"/><circle cx="1176.3" cy="587.4" r="2"/><circle cx="1176.3" cy="584.5" r="2"/><circle cx="1176.3" cy="581.5" r="2"/><circle cx="1176.3" cy="578.6" r="2"/><circle cx="1176.3" cy="575.6" r="2"/><circle cx="1176.3" cy="572.7" r="2"/><circle cx="1176.3" cy="569.8" r="2"/><circle cx="1176.3" cy="566.8" r="2"/><circle cx="1176.3" cy="563.9" r="2"/><circle cx="1176.3" cy="560.9" r="2"/><circle cx="1176.3" cy="558.0" r="2"/><circle cx="1176.3" cy="555.0" r="2"/><circle cx="1178.9" cy="599.2" r="2"/><circle cx="1178.9" cy="590.4" r="2"/><circle cx="1178.9" cy="587.4" r="2"/><circle cx="1178.9" cy="584.5" r="2"/><circle cx="1178.9" cy="581.5" r="2"/><circle cx="1178.9" cy="578.6" r="2"/><circle cx="1178.9" cy="575.6" r="2"/><circle cx="1178.9" cy="572.7" r="2"/><circle cx="1178.9" cy="569.8" r="2"/><circle cx="1178.9" cy="566.8" r="2"/><circle cx="1178.9" cy="563.9" r="2"/><circle cx="1178.9" cy="560.9" r="2"/><circle cx="1178.9" cy="558.0" r="2"/><circle cx="1178.9" cy="555.0" r="2"/><circle cx="1178.9" cy="552.1" r="2"/><circle cx="1178.9" cy="549.1" r="2"/><circle cx="1178.9" cy="546.2" r="2"/><circle cx="1181.5" cy="590.4" r="2"/><circle cx="1181.5" cy="587.4" r="2"/><circle cx="1181.5" cy="584.5" r="2"/><circle cx="1181.5" cy="581.5" r="2"/><circle cx="1181.5" cy="578.6" r="2"/><circle cx="1181.5" cy="575.6" r="2"/><circle cx="1181.5" cy="572.7" r="2"/><circle cx="1181.5" cy="569.8" r="2"/><circle cx="1181.5" cy="566.8" r="2"/><circle cx="1181.5" cy="563.9" r="2"/><circle cx="1181.5" cy="560.9" r="2"/><circle cx="1184.1" cy="602.1" r="2"/><circle cx="1184.1" cy="590.4" r="2"/><circle cx="1184.1" cy="587.4" r="2"/><circle cx="1184.1" cy="584.5" r="2"/><circle cx="1184.1" cy="581.5" r="2"/><circle cx="1184.1" cy="578.6" r="2"/><circle cx="1184.1" cy="575.6" r="2"/><circle cx="1184.1" cy="572.7" r="2"/><circle cx="1184.1" cy="566.8" r="2"/><circle cx="1184.1" cy="563.9" r="2"/><circle cx="1184.1" cy="560.9" r="2"/><circle cx="1184.1" cy="555.0" r="2"/><circle cx="1184.1" cy="552.1" r="2"/><circle cx="1184.1" cy="549.1" r="2"/><circle cx="1186.7" cy="590.4" r="2"/><circle cx="1186.7" cy="587.4" r="2"/><circle cx="1186.7" cy="584.5" r="2"/><circle cx="1186.7" cy="581.5" r="2"/><circle cx="1186.7" cy="578.6" r="2"/><circle cx="1186.7" cy="575.6" r="2"/><circle cx="1186.7" cy="572.7" r="2"/><circle cx="1186.7" cy="569.8" r="2"/><circle cx="1186.7" cy="566.8" r="2"/><circle cx="1186.7" cy="563.9" r="2"/><circle cx="1186.7" cy="560.9" r="2"/><circle cx="1186.7" cy="555.0" r="2"/><circle cx="1186.7" cy="552.1" r="2"/><circle cx="1189.3" cy="593.3" r="2"/><circle cx="1189.3" cy="590.4" r="2"/><circle cx="1189.3" cy="587.4" r="2"/><circle cx="1189.3" cy="584.5" r="2"/><circle cx="1189.3" cy="581.5" r="2"/><circle cx="1189.3" cy="578.6" r="2"/><circle cx="1189.3" cy="575.6" r="2"/><circle cx="1189.3" cy="572.7" r="2"/><circle cx="1189.3" cy="566.8" r="2"/><circle cx="1189.3" cy="563.9" r="2"/><circle cx="1189.3" cy="558.0" r="2"/><circle cx="1189.3" cy="555.0" r="2"/><circle cx="1189.3" cy="552.1" r="2"/><circle cx="1191.9" cy="613.9" r="2"/><circle cx="1191.9" cy="605.1" r="2"/><circle cx="1191.9" cy="593.3" r="2"/><circle cx="1191.9" cy="584.5" r="2"/><circle cx="1191.9" cy="581.5" r="2"/><circle cx="1191.9" cy="578.6" r="2"/><circle cx="1191.9" cy="575.6" r="2"/><circle cx="1191.9" cy="572.7" r="2"/><circle cx="1191.9" cy="569.8" r="2"/><circle cx="1191.9" cy="566.8" r="2"/><circle cx="1191.9" cy="563.9" r="2"/><circle cx="1191.9" cy="560.9" r="2"/><circle cx="1191.9" cy="558.0" r="2"/><circle cx="1191.9" cy="543.3" r="2"/><circle cx="1194.5" cy="590.4" r="2"/><circle cx="1194.5" cy="587.4" r="2"/><circle cx="1194.5" cy="584.5" r="2"/><circle cx="1194.5" cy="581.5" r="2"/><circle cx="1194.5" cy="578.6" r="2"/><circle cx="1194.5" cy="575.6" r="2"/><circle cx="1194.5" cy="572.7" r="2"/><circle cx="1194.5" cy="569.8" r="2"/><circle cx="1194.5" cy="566.8" r="2"/><circle cx="1194.5" cy="563.9" r="2"/><circle cx="1194.5" cy="560.9" r="2"/><circle cx="1197.0" cy="593.3" r="2"/><circle cx="1197.0" cy="590.4" r="2"/><circle cx="1197.0" cy="587.4" r="2"/><circle cx="1197.0" cy="584.5" r="2"/><circle cx="1197.0" cy="581.5" r="2"/><circle cx="1197.0" cy="578.6" r="2"/><circle cx="1197.0" cy="575.6" r="2"/><circle cx="1197.0" cy="572.7" r="2"/><circle cx="1197.0" cy="569.8" r="2"/><circle cx="1197.0" cy="563.9" r="2"/><circle cx="1197.0" cy="555.0" r="2"/><circle cx="1199.6" cy="596.3" r="2"/><circle cx="1199.6" cy="593.3" r="2"/><circle cx="1199.6" cy="590.4" r="2"/><circle cx="1199.6" cy="587.4" r="2"/><circle cx="1199.6" cy="584.5" r="2"/><circle cx="1199.6" cy="581.5" r="2"/><circle cx="1199.6" cy="578.6" r="2"/><circle cx="1199.6" cy="575.6" r="2"/><circle cx="1199.6" cy="572.7" r="2"/><circle cx="1199.6" cy="569.8" r="2"/><circle cx="1199.6" cy="558.0" r="2"/><circle cx="1199.6" cy="555.0" r="2"/><circle cx="1199.6" cy="552.1" r="2"/><circle cx="1202.2" cy="596.3" r="2"/><circle cx="1202.2" cy="593.3" r="2"/><circle cx="1202.2" cy="590.4" r="2"/><circle cx="1202.2" cy="587.4" r="2"/><circle cx="1202.2" cy="584.5" r="2"/><circle cx="1202.2" cy="581.5" r="2"/><circle cx="1202.2" cy="578.6" r="2"/><circle cx="1202.2" cy="575.6" r="2"/><circle cx="1202.2" cy="566.8" r="2"/><circle cx="1202.2" cy="563.9" r="2"/><circle cx="1202.2" cy="560.9" r="2"/><circle cx="1204.8" cy="593.3" r="2"/><circle cx="1204.8" cy="590.4" r="2"/><circle cx="1204.8" cy="587.4" r="2"/><circle cx="1204.8" cy="584.5" r="2"/><circle cx="1204.8" cy="581.5" r="2"/><circle cx="1204.8" cy="578.6" r="2"/><circle cx="1204.8" cy="575.6" r="2"/><circle cx="1204.8" cy="572.7" r="2"/><circle cx="1204.8" cy="569.8" r="2"/><circle cx="1204.8" cy="566.8" r="2"/><circle cx="1204.8" cy="558.0" r="2"/><circle cx="1204.8" cy="555.0" r="2"/><circle cx="1207.4" cy="596.3" r="2"/><circle cx="1207.4" cy="593.3" r="2"/><circle cx="1207.4" cy="590.4" r="2"/><circle cx="1207.4" cy="587.4" r="2"/><circle cx="1207.4" cy="584.5" r="2"/><circle cx="1207.4" cy="581.5" r="2"/><circle cx="1207.4" cy="578.6" r="2"/><circle cx="1207.4" cy="572.7" r="2"/><circle cx="1207.4" cy="566.8" r="2"/><circle cx="1207.4" cy="563.9" r="2"/><circle cx="1207.4" cy="558.0" r="2"/><circle cx="1207.4" cy="555.0" r="2"/><circle cx="1210.0" cy="593.3" r="2"/><circle cx="1210.0" cy="590.4" r="2"/><circle cx="1210.0" cy="587.4" r="2"/><circle cx="1210.0" cy="584.5" r="2"/><circle cx="1210.0" cy="581.5" r="2"/><circle cx="1210.0" cy="578.6" r="2"/><circle cx="1210.0" cy="575.6" r="2"/><circle cx="1210.0" cy="572.7" r="2"/><circle cx="1210.0" cy="566.8" r="2"/><circle cx="1210.0" cy="563.9" r="2"/><circle cx="1210.0" cy="555.0" r="2"/><circle cx="1212.6" cy="587.4" r="2"/><circle cx="1212.6" cy="584.5" r="2"/><circle cx="1212.6" cy="581.5" r="2"/><circle cx="1212.6" cy="578.6" r="2"/><circle cx="1212.6" cy="575.6" r="2"/><circle cx="1212.6" cy="572.7" r="2"/><circle cx="1212.6" cy="569.8" r="2"/><circle cx="1212.6" cy="566.8" r="2"/><circle cx="1212.6" cy="560.9" r="2"/><circle cx="1215.2" cy="587.4" r="2"/><circle cx="1215.2" cy="584.5" r="2"/><circle cx="1215.2" cy="581.5" r="2"/><circle cx="1215.2" cy="578.6" r="2"/><circle cx="1215.2" cy="575.6" r="2"/><circle cx="1215.2" cy="569.8" r="2"/><circle cx="1215.2" cy="563.9" r="2"/><circle cx="1217.8" cy="593.3" r="2"/><circle cx="1217.8" cy="587.4" r="2"/><circle cx="1217.8" cy="584.5" r="2"/><circle cx="1217.8" cy="581.5" r="2"/><circle cx="1217.8" cy="578.6" r="2"/><circle cx="1217.8" cy="572.7" r="2"/><circle cx="1217.8" cy="543.3" r="2"/><circle cx="1220.4" cy="593.3" r="2"/><circle cx="1220.4" cy="590.4" r="2"/><circle cx="1220.4" cy="575.6" r="2"/><circle cx="1220.4" cy="572.7" r="2"/><circle cx="1220.4" cy="569.8" r="2"/><circle cx="1223.0" cy="602.1" r="2"/><circle cx="1223.0" cy="587.4" r="2"/><circle cx="1223.0" cy="584.5" r="2"/><circle cx="1223.0" cy="578.6" r="2"/><circle cx="1223.0" cy="575.6" r="2"/><circle cx="1223.0" cy="569.8" r="2"/><circle cx="1223.0" cy="543.3" r="2"/><circle cx="1225.5" cy="590.4" r="2"/><circle cx="1225.5" cy="584.5" r="2"/><circle cx="1225.5" cy="581.5" r="2"/><circle cx="1225.5" cy="572.7" r="2"/><circle cx="1225.5" cy="569.8" r="2"/><circle cx="1225.5" cy="566.8" r="2"/><circle cx="1228.1" cy="587.4" r="2"/><circle cx="1228.1" cy="581.5" r="2"/><circle cx="1228.1" cy="578.6" r="2"/><circle cx="1228.1" cy="572.7" r="2"/><circle cx="1228.1" cy="569.8" r="2"/><circle cx="1228.1" cy="566.8" r="2"/><circle cx="1228.1" cy="563.9" r="2"/><circle cx="1228.1" cy="560.9" r="2"/><circle cx="1230.7" cy="581.5" r="2"/><circle cx="1230.7" cy="578.6" r="2"/><circle cx="1230.7" cy="566.8" r="2"/><circle cx="1230.7" cy="563.9" r="2"/><circle cx="1230.7" cy="560.9" r="2"/><circle cx="1233.3" cy="596.3" r="2"/><circle cx="1233.3" cy="593.3" r="2"/><circle cx="1233.3" cy="587.4" r="2"/><circle cx="1233.3" cy="584.5" r="2"/><circle cx="1233.3" cy="581.5" r="2"/><circle cx="1233.3" cy="569.8" r="2"/><circle cx="1235.9" cy="602.1" r="2"/><circle cx="1235.9" cy="587.4" r="2"/><circle cx="1235.9" cy="584.5" r="2"/><circle cx="1235.9" cy="572.7" r="2"/><circle cx="1235.9" cy="563.9" r="2"/><circle cx="1238.5" cy="587.4" r="2"/><circle cx="1238.5" cy="578.6" r="2"/><circle cx="1238.5" cy="563.9" r="2"/><circle cx="1241.1" cy="590.4" r="2"/><circle cx="1241.1" cy="587.4" r="2"/><circle cx="1241.1" cy="584.5" r="2"/><circle cx="1241.1" cy="575.6" r="2"/><circle cx="1241.1" cy="549.1" r="2"/><circle cx="1243.7" cy="599.2" r="2"/><circle cx="1243.7" cy="593.3" r="2"/><circle cx="1243.7" cy="578.6" r="2"/><circle cx="1243.7" cy="575.6" r="2"/><circle cx="1243.7" cy="569.8" r="2"/><circle cx="1243.7" cy="566.8" r="2"/><circle cx="1246.3" cy="590.4" r="2"/><circle cx="1246.3" cy="587.4" r="2"/><circle cx="1246.3" cy="581.5" r="2"/><circle cx="1246.3" cy="578.6" r="2"/><circle cx="1246.3" cy="560.9" r="2"/><circle cx="1248.8" cy="596.3" r="2"/><circle cx="1248.8" cy="572.7" r="2"/><circle cx="1248.8" cy="569.8" r="2"/><circle cx="1251.4" cy="590.4" r="2"/><circle cx="1251.4" cy="587.4" r="2"/><circle cx="1251.4" cy="575.6" r="2"/><circle cx="1254.0" cy="590.4" r="2"/><circle cx="1254.0" cy="584.5" r="2"/><circle cx="1254.0" cy="569.8" r="2"/><circle cx="1256.6" cy="572.7" r="2"/><circle cx="1259.2" cy="584.5" r="2"/><circle cx="1259.2" cy="581.5" r="2"/><circle cx="1261.8" cy="581.5" r="2"/><circle cx="1261.8" cy="569.8" r="2"/><circle cx="1261.8" cy="560.9" r="2"/><circle cx="1264.4" cy="593.3" r="2"/><circle cx="1264.4" cy="581.5" r="2"/><circle cx="1264.4" cy="569.8" r="2"/><circle cx="1267.0" cy="590.4" r="2"/><circle cx="1267.0" cy="581.5" r="2"/><circle cx="1267.0" cy="578.6" r="2"/><circle cx="1269.6" cy="605.1" r="2"/><circle cx="1269.6" cy="590.4" r="2"/><circle cx="1269.6" cy="584.5" r="2"/><circle cx="1272.2" cy="590.4" r="2"/><circle cx="1272.2" cy="581.5" r="2"/><circle cx="1272.2" cy="566.8" r="2"/><circle cx="1274.8" cy="584.5" r="2"/><circle cx="1274.8" cy="581.5" r="2"/><circle cx="1277.3" cy="593.3" r="2"/><circle cx="1277.3" cy="584.5" r="2"/><circle cx="1277.3" cy="572.7" r="2"/><circle cx="1279.9" cy="590.4" r="2"/><circle cx="1279.9" cy="566.8" r="2"/><circle cx="1282.5" cy="581.5" r="2"/><circle cx="1282.5" cy="575.6" r="2"/><circle cx="1282.5" cy="572.7" r="2"/><circle cx="1285.1" cy="581.5" r="2"/><circle cx="1285.1" cy="569.8" r="2"/><circle cx="1285.1" cy="566.8" r="2"/><circle cx="1287.7" cy="584.5" r="2"/><circle cx="1287.7" cy="578.6" r="2"/><circle cx="1287.7" cy="566.8" r="2"/><circle cx="1290.3" cy="575.6" r="2"/><circle cx="1290.3" cy="569.8" r="2"/><circle cx="1292.9" cy="599.2" r="2"/><circle cx="1292.9" cy="575.6" r="2"/><circle cx="1292.9" cy="569.8" r="2"/><circle cx="1295.5" cy="587.4" r="2"/><circle cx="1295.5" cy="581.5" r="2"/><circle cx="1295.5" cy="578.6" r="2"/><circle cx="1298.1" cy="605.1" r="2"/><circle cx="1298.1" cy="593.3" r="2"/><circle cx="1298.1" cy="587.4" r="2"/><circle cx="1360.2" cy="578.6" r="2"/><circle cx="1380.9" cy="543.3" r="2"/></g><line x1="976.9" y1="520.2" x2="1378.9" y2="640.3" stroke="#111" stroke-width="1.6" stroke-dasharray="1.6 1.4"/></svg><svg class="a" style="left:360px;top:95px" width="528" height="805" viewBox="360 95 528 805"><rect x="360" y="95" width="528" height="805" fill="#eef0f4"/><path d="M521,95 L735,95 L700,258 L478,258 L486,230Z" fill="#d6e8dd" /><path d="M360,264 L604,264 L557,500 L360,500Z" fill="#d6e8dd" /><path d="M360,514 L553,514 L500,752 L542,757 L633,713 L663,630 L677,518 L796,509 L795,604 L643,700 L643,900 L360,900Z" fill="#d6e8dd" /><path d="M438,95 L490,95 L492,140 L489,170 L472,196 L482,236 L440,238 L401,214 L401,192 L418,152Z" fill="#d6e8dd" /><path d="M401,192 L425,210 L450,220 L470,222 L482,236 L440,238 L401,214Z" fill="#c9e0cf" /><path d="M455,205 L468,200 L478,210 L476,230 L462,232 L455,222Z" fill="#e9efec" /><path d="M430,205 C424,180 430,160 445,150 C455,143 470,140 480,132 M445,150 C450,175 455,195 440,205 C435,208 432,208 430,205" fill="none" stroke="#eef4f0" stroke-width="1.5"/><path d="M487,95 L519,95 L512,118 L490,118Z" fill="#d6e8dd" /><path d="M500,376 L527,373 L531,444 L500,446Z" fill="#c9e0cf" /><path d="M548,322 L592,318 L586,352 L550,352Z" fill="#c9e0cf" /><path d="M390,465 L425,430 L440,470 L440,485 L390,480Z" fill="#c9e0cf" /><path d="M465,310 L520,300 L540,340 L500,345Z" fill="#c9e0cf" /><path d="M535,290 L560,285 L575,300 L545,310Z" fill="#c9e0cf" /><path d="M380,545 L470,535 L480,560 L385,570Z" fill="#c9e0cf" /><path d="M736,120 L789,120 L789,191 L736,191Z" fill="#d6e8dd" /><path d="M791,138 L855,138 L855,166 L791,166Z" fill="#d6e8dd" /><path d="M787,183 L855,183 L855,200 L787,200Z" fill="#d6e8dd" /><path d="M789,277 L862,277 L862,300 L789,300Z" fill="#d6e8dd" /><path d="M774,309 L793,309 L793,344 L774,344Z" fill="#d6e8dd" /><path d="M704,345 L748,345 L748,390 L704,390Z" fill="#d6e8dd" /><path d="M690,404 L713,404 L713,449 L690,449Z" fill="#d6e8dd" /><path d="M743,405 L804,405 L804,493 L743,493Z" fill="#d6e8dd" /><path d="M685,467 L741,467 L741,495 L685,495Z" fill="#d6e8dd" /><path d="M741,690 L792,690 L792,734 L741,734Z" fill="#d6e8dd" /><path d="M708,848 L732,848 L732,895 L708,895Z" fill="#d6e8dd" /><path d="M669,879 L688,879 L688,900 L669,900Z" fill="#d6e8dd" /><path d="M839,858 L855,858 L855,900 L839,900Z" fill="#d6e8dd" /><path d="M867,848 L888,848 L888,900 L867,900Z" fill="#d6e8dd" /><path d="M866,615 L888,612 L888,640 L866,643Z" fill="#ecebe3" /><path d="M796,655 L846,640 L846,665 L796,680Z" fill="#ecebe3" /><path d="M394,95 L431,95 L370,228 L360,230 L360,132Z" fill="#b7cee6" /><path d="M360,160 L380,147" fill="none" stroke="#e8eef5" stroke-width="2" /><path d="M362,190 L378,180" fill="none" stroke="#e8eef5" stroke-width="2" /><path d="M362,205 L376,196" fill="none" stroke="#e8eef5" stroke-width="2" /><path d="M395,250 L470,248 L468,257 L395,258Z" fill="#b7cee6" /><path d="M380,272 L460,268 L470,280 L430,300 L380,300Z" fill="#b7cee6" /><path d="M395,340 L410,330 L425,345 L420,370 L405,380 L395,365Z" fill="#b7cee6" /><path d="M420,285 L430,282 L435,292 L424,296Z" fill="#b7cee6" /><path d="M475,128 L485,125 L490,140 L483,150 L476,142Z" fill="#b7cee6" /><path d="M470,420 L480,415 L487,435 L478,442Z" fill="#b7cee6" /><path d="M475,460 L485,458 L490,478 L478,480Z" fill="#b7cee6" /><path d="M540,310 L555,300 L565,315 L550,322Z" fill="#b7cee6" /><path d="M440,355 L452,350 L458,365 L446,372Z" fill="#b7cee6" /><path d="M365,720 L405,718 L415,740 L375,748Z" fill="#b7cee6" /><path d="M500,745 L560,740 L560,757 L500,757Z" fill="#c5d8ea" /><path d="M716,262 L700,340 L685,470 L676,500" fill="none" stroke="#c3d5ea" stroke-width="3" /><path d="M640,100 L600,258" fill="none" stroke="#c4d8e8" stroke-width="1" /><path d="M700,100 L662,258" fill="none" stroke="#c4d8e8" stroke-width="1" /><path d="M668,518 L652,640 L637,700" fill="none" stroke="#c3d5ea" stroke-width="2" /><defs><clipPath id="urbR"><path d="M740,205 L888,205 L888,500 L740,500Z"/></clipPath><clipPath id="urbB"><path d="M796,509 L888,509 L888,900 L643,900 L643,700 L795,604Z"/></clipPath><clipPath id="urbT"><path d="M740,95 L888,95 L888,205 L740,205Z"/></clipPath></defs><g clip-path="url(#urbR)"><path d="M742.0,205 L756.8,500 M772.0,205 L786.8,500 M802.0,205 L816.8,500 M832.0,205 L846.8,500 M862.0,205 L876.8,500 M742,205.0 L888,202.8 M742,229.0 L888,226.8 M742,253.0 L888,250.8 M742,277.0 L888,274.8 M742,301.0 L888,298.8 M742,325.0 L888,322.8 M742,349.0 L888,346.8 M742,373.0 L888,370.8 M742,397.0 L888,394.8 M742,421.0 L888,418.8 M742,445.0 L888,442.8 M742,469.0 L888,466.8 M742,493.0 L888,490.8 M742,517.0 L888,514.8" fill="none" stroke="#d3d7de" stroke-width="1"/></g><g clip-path="url(#urbB)"><path d="M600.0,560 L579.6,900 M627.0,560 L606.6,900 M654.0,560 L633.6,900 M681.0,560 L660.6,900 M708.0,560 L687.6,900 M735.0,560 L714.6,900 M762.0,560 L741.6,900 M789.0,560 L768.6,900 M816.0,560 L795.6,900 M843.0,560 L822.6,900 M870.0,560 L849.6,900 M897.0,560 L876.6,900 M600,560.0 L900,479.0 M600,584.0 L900,503.0 M600,608.0 L900,527.0 M600,632.0 L900,551.0 M600,656.0 L900,575.0 M600,680.0 L900,599.0 M600,704.0 L900,623.0 M600,728.0 L900,647.0 M600,752.0 L900,671.0 M600,776.0 L900,695.0 M600,800.0 L900,719.0 M600,824.0 L900,743.0 M600,848.0 L900,767.0 M600,872.0 L900,791.0 M600,896.0 L900,815.0 M600,920.0 L900,839.0 M600,944.0 L900,863.0 M600,968.0 L900,887.0 M600,992.0 L900,911.0" fill="none" stroke="#d3d7de" stroke-width="1"/></g><g clip-path="url(#urbT)"><path d="M742.0,95 L745.3,205 M777.0,95 L780.3,205 M812.0,95 L815.3,205 M847.0,95 L850.3,205 M882.0,95 L885.3,205 M742,95.0 L888,93.7 M742,125.0 L888,123.7 M742,155.0 L888,153.7 M742,185.0 L888,183.7 M742,215.0 L888,213.7" fill="none" stroke="#d3d7de" stroke-width="1"/></g><path d="M360,505 L520,511 L640,510 L760,504 L888,497" fill="none" stroke="#e2e5ea" stroke-width="10" /><path d="M360,505 L520,511 L640,510 L760,504 L888,497" fill="none" stroke="#ffffff" stroke-width="7" stroke-linecap="round" stroke-linejoin="round"/><path d="M360,262 L600,260 L700,262 L735,245 L780,232 L888,232" fill="none" stroke="#ffffff" stroke-width="5" stroke-linecap="round" stroke-linejoin="round"/><path d="M735,95 L700,262 L680,400 L662,500" fill="none" stroke="#ffffff" stroke-width="3.5" stroke-linecap="round" stroke-linejoin="round"/><path d="M523,95 L478,258" fill="none" stroke="#ffffff" stroke-width="3" stroke-linecap="round" stroke-linejoin="round"/><path d="M604,262 L556,500 L538,590" fill="none" stroke="#ffffff" stroke-width="3.5" stroke-linecap="round" stroke-linejoin="round"/><path d="M640,262 L610,500" fill="none" stroke="#ffffff" stroke-width="2" stroke-linecap="round" stroke-linejoin="round"/><path d="M737,509 L727,700 L705,900" fill="none" stroke="#ffffff" stroke-width="3" stroke-linecap="round" stroke-linejoin="round"/><path d="M792,509 L793,690 L806,900" fill="none" stroke="#ffffff" stroke-width="2.5" stroke-linecap="round" stroke-linejoin="round"/><path d="M643,700 L790,621 L888,604" fill="none" stroke="#ffffff" stroke-width="3" stroke-linecap="round" stroke-linejoin="round"/><path d="M780,95 L760,500" fill="none" stroke="#ffffff" stroke-width="2" stroke-linecap="round" stroke-linejoin="round"/><path d="M845,95 L870,500" fill="none" stroke="#ffffff" stroke-width="2.5" stroke-linecap="round" stroke-linejoin="round"/><path d="M360,335 L395,270 L450,262" fill="none" stroke="#ffffff" stroke-width="4" stroke-linecap="round" stroke-linejoin="round"/><path d="M360,300 L380,275" fill="none" stroke="#ffffff" stroke-width="3" stroke-linecap="round" stroke-linejoin="round"/><path d="M706,900 L813,867 L888,850" fill="none" stroke="#ffffff" stroke-width="2.5" stroke-linecap="round" stroke-linejoin="round"/><path d="M560,520 L600,540 L640,560" fill="none" stroke="#ffffff" stroke-width="1.5" stroke-linecap="round" stroke-linejoin="round"/><path d="M820,95 L800,140" fill="none" stroke="#ffffff" stroke-width="1.5" stroke-linecap="round" stroke-linejoin="round"/><path d="M380,305 L560,460 L600,490" fill="none" stroke="#bcd3e8" stroke-width="1" /><path d="M400,290 L560,430" fill="none" stroke="#bcd3e8" stroke-width="1" /><path d="M360,780 L470,850" fill="none" stroke="#bcd3e8" stroke-width="1" /><path d="M380,900 L480,780" fill="none" stroke="#bcd3e8" stroke-width="1" /><path d="M360,650 L500,640" fill="none" stroke="#bcd3e8" stroke-width="1" /><path d="M420,900 L520,780 L560,760" fill="none" stroke="#bcd3e8" stroke-width="1" /><path d="M360,560 L470,548" fill="none" stroke="#bcd3e8" stroke-width="1" /><path d="M400,600 L380,700 L420,760" fill="none" stroke="#bcd3e8" stroke-width="1" /><path d="M560,820 L620,760" fill="none" stroke="#bcd3e8" stroke-width="1" /><path d="M540,900 L600,800" fill="none" stroke="#bcd3e8" stroke-width="1" /><path d="M360,334 Q430,430 556,491" fill="none" stroke="#aab2b8" stroke-width="0.8"/><path d="M360,476 L445,484" fill="none" stroke="#c9cfd3" stroke-width="0.8"/><path d="M610,290 L730,295" fill="none" stroke="#dfe2e7" stroke-width="1" /><path d="M600,450 L700,455" fill="none" stroke="#dfe2e7" stroke-width="1" /><path d="M360,757 L542,757 L633,713 L663,631 L681,506 L738,513 L741,494 L797,494 L796,331 L888,313" fill="none" stroke="#2a3d5a" stroke-width="1.5" /><path d="M431,95 L370,228 L360,230" fill="none" stroke="#2a3d5a" stroke-width="1.3" /><path d="M395,95 L360,132" fill="none" stroke="#2a3d5a" stroke-width="1.3" /><path d="M360,128 L378,120" fill="none" stroke="#2a3d5a" stroke-width="1.1" /><path d="M385,147 L385,152 L360,186" fill="none" stroke="#2a3d5a" stroke-width="1.2" /><path d="M360,146 L385,147" fill="none" stroke="#2a3d5a" stroke-width="1.1" /><path d="M360,243 L372,255" fill="none" stroke="#2a3d5a" stroke-width="1.2" /><path d="M598,252 Q601,241 614,241 L712,242 Q729,244 731,262 L732,410 L722,480 L712,560 L690,640 L676,686 Q650,740 615,759 L488,773 Q462,776 462,748 L490,610 L517,490 L553,355 Z" fill="none" stroke="#d8121d" stroke-width="2.3" stroke-dasharray="2.6 3.2"/><defs><g id="pin"><path d="M0 10 L-5.4 4.2 A7.2 7.2 0 1 1 5.4 4.2Z" fill="#2b5c91"/><path d="M-1.8 -3.6 L-1.8 2.4 L2.6 2.4" fill="none" stroke="#f4f7fb" stroke-width="1.4"/></g><path id="pin0" d="M0 10 L-5.4 4.2 A7.2 7.2 0 1 1 5.4 4.2Z" fill="#2b5c91"/></defs><g><use href="#pin" x="678.0" y="271.7"/><use href="#pin0" x="693.2" y="271.8"/><use href="#pin" x="686.2" y="272.3"/><use href="#pin0" x="687.2" y="278.7"/><use href="#pin0" x="693.0" y="279.6"/><use href="#pin" x="676.4" y="279.8"/><use href="#pin" x="680.2" y="280.6"/><use href="#pin0" x="673.3" y="285.9"/><use href="#pin" x="692.7" y="286.2"/><use href="#pin" x="674.8" y="286.5"/><use href="#pin0" x="689.3" y="287.8"/><use href="#pin0" x="680.1" y="290.6"/><use href="#pin0" x="690.3" y="293.5"/><use href="#pin0" x="671.4" y="293.7"/><use href="#pin0" x="673.4" y="294.4"/><use href="#pin" x="689.7" y="296.7"/><use href="#pin0" x="677.7" y="298.4"/><use href="#pin0" x="690.8" y="300.1"/><use href="#pin0" x="668.0" y="301.0"/><use href="#pin0" x="687.2" y="303.9"/><use href="#pin0" x="680.3" y="304.8"/><use href="#pin" x="669.5" y="305.1"/><use href="#pin0" x="688.2" y="307.5"/><use href="#pin" x="703.0" y="308.0"/><use href="#pin0" x="665.5" y="308.0"/><use href="#pin" x="685.5" y="309.5"/><use href="#pin" x="671.6" y="311.2"/><use href="#pin0" x="677.6" y="314.3"/><use href="#pin0" x="665.5" y="314.5"/><use href="#pin0" x="662.2" y="315.4"/><use href="#pin0" x="686.3" y="315.4"/><use href="#pin0" x="682.5" y="319.6"/><use href="#pin0" x="665.3" y="320.4"/><use href="#pin" x="658.9" y="322.3"/><use href="#pin0" x="686.5" y="322.5"/><use href="#pin" x="674.5" y="322.6"/><use href="#pin0" x="666.3" y="326.7"/><use href="#pin0" x="669.1" y="328.1"/><use href="#pin" x="680.3" y="328.4"/><use href="#pin" x="656.9" y="330.2"/><use href="#pin" x="684.4" y="330.7"/><use href="#pin0" x="663.4" y="335.0"/><use href="#pin" x="680.0" y="336.2"/><use href="#pin0" x="674.8" y="337.0"/><use href="#pin" x="653.3" y="337.3"/><use href="#pin0" x="656.1" y="337.6"/><use href="#pin" x="681.1" y="338.2"/><use href="#pin" x="607.0" y="339.0"/><use href="#pin" x="663.3" y="342.0"/><use href="#pin0" x="670.2" y="343.5"/><use href="#pin0" x="679.6" y="344.1"/><use href="#pin0" x="650.3" y="345.1"/><use href="#pin0" x="657.4" y="346.9"/><use href="#pin" x="692.0" y="350.0"/><use href="#pin0" x="648.6" y="350.3"/><use href="#pin0" x="654.1" y="350.7"/><use href="#pin0" x="676.2" y="351.5"/><use href="#pin0" x="670.9" y="352.3"/><use href="#pin" x="638.4" y="353.3"/><use href="#pin0" x="662.0" y="353.5"/><use href="#pin0" x="640.1" y="353.7"/><use href="#pin0" x="632.8" y="355.1"/><use href="#pin0" x="625.7" y="356.5"/><use href="#pin0" x="648.9" y="358.4"/><use href="#pin" x="617.7" y="358.6"/><use href="#pin0" x="625.8" y="359.3"/><use href="#pin0" x="653.1" y="359.8"/><use href="#pin" x="632.2" y="360.1"/><use href="#pin" x="610.6" y="360.3"/><use href="#pin0" x="673.3" y="360.6"/><use href="#pin0" x="604.6" y="361.0"/><use href="#pin" x="663.2" y="361.8"/><use href="#pin0" x="674.2" y="362.4"/><use href="#pin" x="613.3" y="362.7"/><use href="#pin" x="600.3" y="362.7"/><use href="#pin" x="638.6" y="362.9"/><use href="#pin0" x="649.3" y="365.6"/><use href="#pin0" x="591.8" y="366.2"/><use href="#pin" x="637.5" y="366.6"/><use href="#pin0" x="674.1" y="366.8"/><use href="#pin" x="655.9" y="367.8"/><use href="#pin0" x="594.2" y="368.1"/><use href="#pin" x="606.6" y="368.2"/><use href="#pin0" x="666.7" y="368.5"/><use href="#pin0" x="613.9" y="369.6"/><use href="#pin0" x="621.0" y="369.9"/><use href="#pin0" x="634.1" y="369.9"/><use href="#pin" x="600.8" y="371.0"/><use href="#pin" x="673.9" y="371.1"/><use href="#pin0" x="592.3" y="374.0"/><use href="#pin" x="594.0" y="374.3"/><use href="#pin" x="621.5" y="374.8"/><use href="#pin" x="614.9" y="374.9"/><use href="#pin" x="689.0" y="375.0"/><use href="#pin0" x="669.1" y="375.3"/><use href="#pin" x="645.6" y="375.4"/><use href="#pin" x="600.3" y="376.2"/><use href="#pin0" x="666.0" y="376.9"/><use href="#pin" x="639.2" y="377.1"/><use href="#pin0" x="631.8" y="377.3"/><use href="#pin0" x="605.9" y="378.0"/><use href="#pin" x="674.2" y="378.4"/><use href="#pin0" x="655.8" y="378.8"/><use href="#pin0" x="592.3" y="380.6"/><use href="#pin0" x="674.0" y="381.6"/><use href="#pin0" x="638.5" y="382.2"/><use href="#pin0" x="601.8" y="382.2"/><use href="#pin0" x="608.7" y="382.7"/><use href="#pin0" x="649.4" y="383.0"/><use href="#pin0" x="665.3" y="383.0"/><use href="#pin" x="622.8" y="383.0"/><use href="#pin0" x="615.3" y="384.2"/><use href="#pin" x="658.7" y="384.4"/><use href="#pin" x="686.0" y="385.0"/><use href="#pin" x="631.4" y="385.0"/><use href="#pin" x="692.0" y="387.0"/><use href="#pin0" x="674.0" y="387.7"/><use href="#pin0" x="663.5" y="389.1"/><use href="#pin0" x="593.0" y="389.4"/><use href="#pin" x="623.4" y="389.4"/><use href="#pin" x="613.9" y="389.7"/><use href="#pin0" x="605.5" y="390.4"/><use href="#pin" x="655.3" y="391.0"/><use href="#pin0" x="634.5" y="391.6"/><use href="#pin0" x="602.0" y="392.6"/><use href="#pin" x="640.1" y="392.9"/><use href="#pin0" x="671.4" y="393.2"/><use href="#pin0" x="649.6" y="393.9"/><use href="#pin" x="591.1" y="395.4"/><use href="#pin0" x="600.1" y="395.5"/><use href="#pin" x="674.3" y="395.8"/><use href="#pin0" x="608.7" y="396.0"/><use href="#pin0" x="667.6" y="396.6"/><use href="#pin" x="615.5" y="397.1"/><use href="#pin" x="660.1" y="397.5"/><use href="#pin" x="697.0" y="398.0"/><use href="#pin0" x="623.6" y="398.1"/><use href="#pin0" x="640.6" y="398.2"/><use href="#pin" x="631.2" y="398.3"/><use href="#pin0" x="650.8" y="399.0"/><use href="#pin" x="682.0" y="402.0"/><use href="#pin0" x="667.0" y="404.0"/><use href="#pin" x="581.5" y="411.1"/><use href="#pin" x="680.0" y="412.0"/><use href="#pin" x="582.2" y="412.2"/><use href="#pin" x="601.8" y="412.6"/><use href="#pin" x="595.7" y="412.7"/><use href="#pin0" x="589.5" y="412.9"/><use href="#pin" x="589.6" y="414.4"/><use href="#pin" x="688.0" y="416.0"/><use href="#pin" x="599.5" y="418.8"/><use href="#pin0" x="602.1" y="419.2"/><use href="#pin" x="582.8" y="419.3"/><use href="#pin0" x="591.4" y="420.6"/><use href="#pin" x="620.0" y="421.0"/><use href="#pin0" x="583.4" y="422.4"/><use href="#pin" x="636.0" y="423.0"/><use href="#pin" x="581.6" y="424.5"/><use href="#pin" x="657.0" y="425.0"/><use href="#pin" x="582.6" y="425.4"/><use href="#pin0" x="628.0" y="426.0"/><use href="#pin" x="647.0" y="426.0"/><use href="#pin" x="603.5" y="426.1"/><use href="#pin" x="598.0" y="427.4"/><use href="#pin" x="587.7" y="427.7"/><use href="#pin0" x="581.5" y="431.6"/><use href="#pin" x="603.2" y="432.6"/><use href="#pin" x="590.2" y="434.4"/><use href="#pin" x="596.2" y="436.1"/><use href="#pin0" x="590.9" y="439.0"/><use href="#pin" x="600.0" y="442.0"/><use href="#pin" x="722.0" y="448.0"/><use href="#pin" x="547.0" y="548.0"/><use href="#pin" x="620.0" y="553.0"/><use href="#pin" x="566.0" y="561.0"/><use href="#pin" x="619.0" y="566.0"/><use href="#pin" x="616.0" y="581.0"/><use href="#pin" x="576.0" y="582.0"/><use href="#pin" x="564.0" y="583.0"/><use href="#pin" x="612.0" y="596.0"/><use href="#pin" x="603.0" y="598.0"/><use href="#pin" x="580.0" y="600.0"/><use href="#pin" x="594.0" y="602.0"/><use href="#pin0" x="585.5" y="605.2"/><use href="#pin" x="536.8" y="605.6"/><use href="#pin" x="574.5" y="606.5"/><use href="#pin0" x="577.9" y="606.7"/><use href="#pin0" x="537.8" y="607.8"/><use href="#pin0" x="550.5" y="607.9"/><use href="#pin" x="568.3" y="608.3"/><use href="#pin" x="571.9" y="608.8"/><use href="#pin0" x="547.6" y="609.8"/><use href="#pin" x="575.7" y="611.4"/><use href="#pin0" x="527.7" y="611.9"/><use href="#pin0" x="567.9" y="612.4"/><use href="#pin" x="544.7" y="612.7"/><use href="#pin" x="559.4" y="613.0"/><use href="#pin0" x="586.6" y="613.4"/><use href="#pin0" x="529.1" y="614.8"/><use href="#pin0" x="589.7" y="614.8"/><use href="#pin" x="537.0" y="615.0"/><use href="#pin" x="563.0" y="615.2"/><use href="#pin" x="556.0" y="617.0"/><use href="#pin0" x="525.9" y="619.1"/><use href="#pin" x="574.6" y="619.4"/><use href="#pin" x="586.8" y="620.1"/><use href="#pin" x="566.7" y="620.5"/><use href="#pin" x="546.7" y="620.6"/><use href="#pin" x="550.5" y="621.0"/><use href="#pin0" x="531.9" y="621.4"/><use href="#pin" x="534.4" y="622.8"/><use href="#pin" x="592.6" y="623.3"/><use href="#pin0" x="563.8" y="623.5"/><use href="#pin0" x="591.8" y="627.4"/><use href="#pin0" x="523.5" y="627.8"/><use href="#pin" x="575.3" y="628.5"/><use href="#pin0" x="527.3" y="628.6"/><use href="#pin0" x="586.6" y="629.0"/><use href="#pin" x="551.3" y="629.4"/><use href="#pin0" x="563.1" y="630.9"/><use href="#pin0" x="539.8" y="631.8"/><use href="#pin0" x="543.8" y="632.3"/><use href="#pin0" x="566.6" y="632.9"/><use href="#pin" x="592.5" y="633.0"/><use href="#pin" x="592.5" y="635.6"/><use href="#pin" x="543.1" y="635.9"/><use href="#pin" x="559.5" y="636.1"/><use href="#pin" x="520.2" y="637.7"/><use href="#pin0" x="531.8" y="637.9"/><use href="#pin" x="587.3" y="638.6"/><use href="#pin0" x="555.5" y="639.9"/><use href="#pin" x="537.4" y="640.2"/><use href="#pin0" x="519.4" y="640.5"/><use href="#pin0" x="570.4" y="640.6"/><use href="#pin0" x="575.2" y="640.7"/><use href="#pin0" x="592.4" y="640.7"/><use href="#pin0" x="584.7" y="643.4"/><use href="#pin0" x="571.5" y="644.2"/><use href="#pin" x="542.4" y="644.4"/><use href="#pin0" x="574.1" y="644.6"/><use href="#pin" x="561.7" y="644.7"/><use href="#pin" x="529.6" y="644.8"/><use href="#pin0" x="591.1" y="645.2"/><use href="#pin0" x="535.1" y="647.3"/><use href="#pin" x="519.5" y="647.9"/><use href="#pin0" x="553.4" y="648.1"/><use href="#pin0" x="516.8" y="650.8"/><use href="#pin" x="594.4" y="650.8"/><use href="#pin" x="534.8" y="651.2"/><use href="#pin0" x="582.5" y="654.3"/><use href="#pin0" x="530.1" y="654.5"/><use href="#pin0" x="558.1" y="654.8"/><use href="#pin" x="523.9" y="654.9"/><use href="#pin" x="568.9" y="655.4"/><use href="#pin0" x="594.4" y="656.4"/><use href="#pin0" x="542.1" y="656.5"/><use href="#pin" x="554.2" y="656.8"/><use href="#pin0" x="575.9" y="657.0"/><use href="#pin0" x="596.9" y="659.2"/><use href="#pin0" x="513.6" y="659.8"/><use href="#pin0" x="553.7" y="661.3"/><use href="#pin" x="586.4" y="661.3"/><use href="#pin0" x="547.2" y="662.4"/><use href="#pin0" x="594.4" y="662.5"/><use href="#pin" x="561.5" y="662.7"/><use href="#pin" x="566.5" y="662.8"/><use href="#pin" x="520.1" y="663.1"/><use href="#pin0" x="536.5" y="663.7"/><use href="#pin" x="531.4" y="664.2"/><use href="#pin0" x="580.0" y="664.3"/><use href="#pin0" x="514.8" y="664.5"/><use href="#pin" x="551.5" y="667.1"/><use href="#pin" x="567.2" y="668.0"/><use href="#pin" x="528.9" y="668.4"/><use href="#pin" x="512.7" y="668.6"/><use href="#pin" x="538.2" y="670.0"/><use href="#pin0" x="598.0" y="670.5"/><use href="#pin0" x="518.2" y="670.6"/><use href="#pin" x="579.4" y="671.0"/><use href="#pin0" x="592.0" y="671.0"/><use href="#pin" x="559.8" y="671.1"/><use href="#pin" x="584.7" y="672.4"/><use href="#pin" x="545.7" y="672.5"/><use href="#pin0" x="559.7" y="676.0"/><use href="#pin0" x="568.7" y="676.7"/><use href="#pin" x="510.9" y="676.8"/><use href="#pin" x="529.5" y="676.9"/><use href="#pin" x="523.3" y="677.3"/><use href="#pin" x="575.3" y="677.5"/><use href="#pin0" x="595.5" y="677.9"/><use href="#pin0" x="585.8" y="678.0"/><use href="#pin" x="534.8" y="678.0"/><use href="#pin" x="591.9" y="680.0"/><use href="#pin" x="547.0" y="680.1"/><use href="#pin" x="514.8" y="680.5"/><use href="#pin0" x="554.3" y="680.7"/><use href="#pin0" x="552.7" y="683.1"/><use href="#pin" x="523.2" y="683.2"/><use href="#pin0" x="566.8" y="683.3"/><use href="#pin0" x="542.1" y="683.8"/><use href="#pin" x="592.4" y="684.1"/><use href="#pin" x="563.0" y="684.4"/><use href="#pin0" x="511.6" y="684.6"/><use href="#pin0" x="577.8" y="685.7"/><use href="#pin" x="530.3" y="686.4"/><use href="#pin0" x="585.8" y="686.9"/><use href="#pin0" x="535.9" y="687.7"/><use href="#pin" x="571.4" y="691.5"/><use href="#pin0" x="589.7" y="691.6"/><use href="#pin0" x="510.0" y="692.0"/><use href="#pin" x="512.9" y="692.1"/><use href="#pin" x="530.3" y="692.1"/><use href="#pin" x="535.6" y="693.1"/><use href="#pin0" x="582.8" y="693.7"/><use href="#pin0" x="518.1" y="693.8"/><use href="#pin" x="546.2" y="694.1"/><use href="#pin" x="579.6" y="695.3"/><use href="#pin0" x="553.7" y="695.5"/><use href="#pin0" x="560.4" y="695.8"/><use href="#pin" x="509.3" y="699.8"/><use href="#pin0" x="588.1" y="700.0"/><use href="#pin" x="529.9" y="700.2"/><use href="#pin0" x="587.1" y="701.1"/><use href="#pin0" x="523.7" y="701.8"/><use href="#pin0" x="545.8" y="703.3"/><use href="#pin0" x="569.2" y="703.7"/><use href="#pin0" x="515.3" y="703.8"/><use href="#pin0" x="538.3" y="703.9"/><use href="#pin0" x="551.3" y="704.4"/><use href="#pin" x="575.9" y="704.5"/><use href="#pin0" x="563.9" y="704.9"/><use href="#pin" x="512.9" y="707.2"/><use href="#pin" x="522.9" y="707.4"/><use href="#pin0" x="579.7" y="707.5"/><use href="#pin" x="542.8" y="707.9"/><use href="#pin" x="530.8" y="708.0"/><use href="#pin" x="508.4" y="708.2"/><use href="#pin0" x="589.1" y="708.3"/><use href="#pin" x="571.7" y="710.0"/><use href="#pin" x="583.3" y="710.2"/><use href="#pin0" x="563.0" y="711.1"/><use href="#pin" x="553.1" y="711.3"/><use href="#pin0" x="536.0" y="711.7"/><use href="#pin0" x="569.6" y="715.2"/><use href="#pin0" x="507.8" y="715.6"/><use href="#pin0" x="553.4" y="716.2"/><use href="#pin0" x="519.9" y="717.3"/><use href="#pin0" x="589.4" y="717.4"/><use href="#pin" x="561.2" y="718.0"/><use href="#pin0" x="579.8" y="718.1"/><use href="#pin0" x="547.8" y="718.1"/><use href="#pin0" x="515.1" y="718.4"/><use href="#pin" x="584.4" y="719.8"/><use href="#pin0" x="535.2" y="720.1"/><use href="#pin0" x="531.1" y="720.4"/><use href="#pin" x="506.0" y="721.5"/><use href="#pin" x="578.7" y="723.1"/><use href="#pin0" x="506.1" y="723.4"/><use href="#pin0" x="571.6" y="723.8"/><use href="#pin" x="583.2" y="724.4"/><use href="#pin" x="552.9" y="724.9"/><use href="#pin" x="513.2" y="725.5"/><use href="#pin0" x="534.8" y="725.6"/><use href="#pin0" x="527.6" y="725.8"/><use href="#pin" x="559.9" y="726.5"/><use href="#pin" x="550.2" y="727.9"/><use href="#pin" x="523.7" y="728.5"/><use href="#pin" x="586.7" y="729.0"/><use href="#pin" x="504.4" y="729.3"/><use href="#pin" x="541.0" y="729.9"/><use href="#pin" x="578.9" y="731.2"/><use href="#pin0" x="567.1" y="731.9"/><use href="#pin0" x="527.5" y="732.2"/><use href="#pin" x="533.2" y="733.0"/><use href="#pin0" x="515.7" y="735.2"/><use href="#pin" x="525.1" y="735.4"/><use href="#pin0" x="508.5" y="735.8"/></g><text x="651" y="146" font-size="9.5" fill="#7d8a99" font-family="Liberation Sans">2300</text><text x="447" y="445" font-size="9.5" fill="#7d8a99" font-family="Liberation Sans">2300</text><text x="378" y="578" font-size="9.5" fill="#7d8a99" font-family="Liberation Sans">2300</text><text x="533" y="530" font-size="9.5" fill="#7d8a99" font-family="Liberation Sans">2300</text><text x="832" y="175" font-size="9.5" fill="#555c66" font-family="Liberation Sans">Sundbyvester</text><text x="813" y="744" font-size="9" fill="#555c66" font-family="Liberation Sans">Tårnbylund</text><text x="862" y="815" font-size="9.5" fill="#7d8a99" font-family="Liberation Sans">2770</text><text x="422" y="500" font-size="6" fill="#6b7280" font-family="Liberation Sans">E 20</text><text transform="translate(617,264.5) rotate(0)" font-size="5.5" fill="#8a919a" font-family="Liberation Sans" text-anchor="middle">Vejlands Allé</text><text transform="translate(796,234.5) rotate(0)" font-size="5.5" fill="#8a919a" font-family="Liberation Sans" text-anchor="middle">Vejlands Allé</text><text transform="translate(745,256) rotate(-25)" font-size="5.5" fill="#8a919a" font-family="Liberation Sans" text-anchor="middle">Vejlands Allé</text><text transform="translate(428,274) rotate(-40)" font-size="5.5" fill="#8a919a" font-family="Liberation Sans" text-anchor="middle">Selinevej</text><text transform="translate(507,150) rotate(-75)" font-size="5.5" fill="#8a919a" font-family="Liberation Sans" text-anchor="middle">Amagerfælledvej</text><text transform="translate(486,213) rotate(-75)" font-size="5.5" fill="#8a919a" font-family="Liberation Sans" text-anchor="middle">Amagerfælledvej</text><text transform="translate(721,175) rotate(-77)" font-size="5.5" fill="#8a919a" font-family="Liberation Sans" text-anchor="middle">Ørestads Blvd</text><text transform="translate(741,150) rotate(-85)" font-size="5.5" fill="#8a919a" font-family="Liberation Sans" text-anchor="middle">Digevej</text><text transform="translate(737,196) rotate(-85)" font-size="5.5" fill="#8a919a" font-family="Liberation Sans" text-anchor="middle">Digevej</text><text transform="translate(567,478) rotate(-78)" font-size="5.5" fill="#8a919a" font-family="Liberation Sans" text-anchor="middle">Center Blvd</text><text transform="translate(735,575) rotate(-88)" font-size="5.5" fill="#8a919a" font-family="Liberation Sans" text-anchor="middle">Kongelundsvej</text><text transform="translate(778,632) rotate(-22)" font-size="5.5" fill="#8a919a" font-family="Liberation Sans" text-anchor="middle">Løjtegårdsvej</text><text transform="translate(785,250) rotate(-88)" font-size="5.5" fill="#8a919a" font-family="Liberation Sans" text-anchor="middle">Sølvgadevej</text><text transform="translate(873,200) rotate(-85)" font-size="5.5" fill="#8a919a" font-family="Liberation Sans" text-anchor="middle">Englandsvej</text><text transform="translate(870,540) rotate(-85)" font-size="5.5" fill="#8a919a" font-family="Liberation Sans" text-anchor="middle">Fremtidsvej</text><text transform="translate(721,680) rotate(-87)" font-size="5.5" fill="#8a919a" font-family="Liberation Sans" text-anchor="middle">Kongelundsvej</text><text transform="translate(790,730) rotate(-88)" font-size="5.5" fill="#8a919a" font-family="Liberation Sans" text-anchor="middle">Ørnebjergvej</text><text transform="translate(690,832) rotate(-20)" font-size="5.5" fill="#8a919a" font-family="Liberation Sans" text-anchor="middle">Byvangsgårdsvej</text><text transform="translate(790,780) rotate(-20)" font-size="5.5" fill="#8a919a" font-family="Liberation Sans" text-anchor="middle">Byvangsgårdsvej</text><text transform="translate(858,720) rotate(-20)" font-size="5.5" fill="#8a919a" font-family="Liberation Sans" text-anchor="middle">Brønderslev Allé</text><text transform="translate(800,883) rotate(-20)" font-size="5.5" fill="#8a919a" font-family="Liberation Sans" text-anchor="middle">Ørestads Blvd</text><text transform="translate(853,308) rotate(-85)" font-size="5.5" fill="#8a919a" font-family="Liberation Sans" text-anchor="middle">Englandsvej</text><text x="770" y="507" font-size="6" fill="#6b7280" font-family="Liberation Sans">E 20</text></svg><div class="a" style="left:370px;top:104px;width:21px;height:41px;background:#fff;border-radius:2px;box-shadow:0 0 2px rgba(0,0,0,0.2)"></div>
<div class="a" style="left:372px;top:124px;width:17px;height:1px;background:#e6e6e6"></div>
<svg class="a" style="left:370px;top:104px" width="21" height="41" viewBox="0 0 21 41"><path d="M10.5 6 L10.5 14.5 M6.2 10.2 L14.8 10.2 M6.5 30.8 L14.5 30.8" stroke="#1e1e1e" stroke-width="1.6"/></svg>
<div class="a" style="left:400px;top:104px;width:81px;height:20.5px;background:#e30a1a;border-radius:3px"></div>
<svg class="a" style="left:405px;top:107px" width="14" height="14" viewBox="0 0 14 14"><path d="M2.8 3 L2.8 11.2 L11 11.2" fill="none" stroke="#fff" stroke-width="1.2"/><path d="M3 2.8 L11.2 2.8 L11.2 11" fill="none" stroke="#fff" stroke-width="1.1" stroke-dasharray="1.3 1"/><rect x="1.8" y="1.8" width="2.4" height="2.4" fill="#fff"/><rect x="9.9" y="1.8" width="2.4" height="2.4" fill="#fff"/><rect x="9.9" y="9.9" width="2.4" height="2.4" fill="#fff"/></svg>
<div class="t" style="left:422.5px;top:109.5px;font-size:8.8px;color:#fdeef0">Fjern område</div>
<div class="a" style="left:875px;top:112px;width:13px;height:38px;background:#fff;border-radius:2px 0 0 2px"></div>
<svg class="a" style="left:877px;top:125px" width="10" height="12" viewBox="0 0 10 12"><path d="M3.5 2.5 L6.8 6 L3.5 9.5" fill="none" stroke="#b8bcc2" stroke-width="1.1"/></svg>
</body></html>
